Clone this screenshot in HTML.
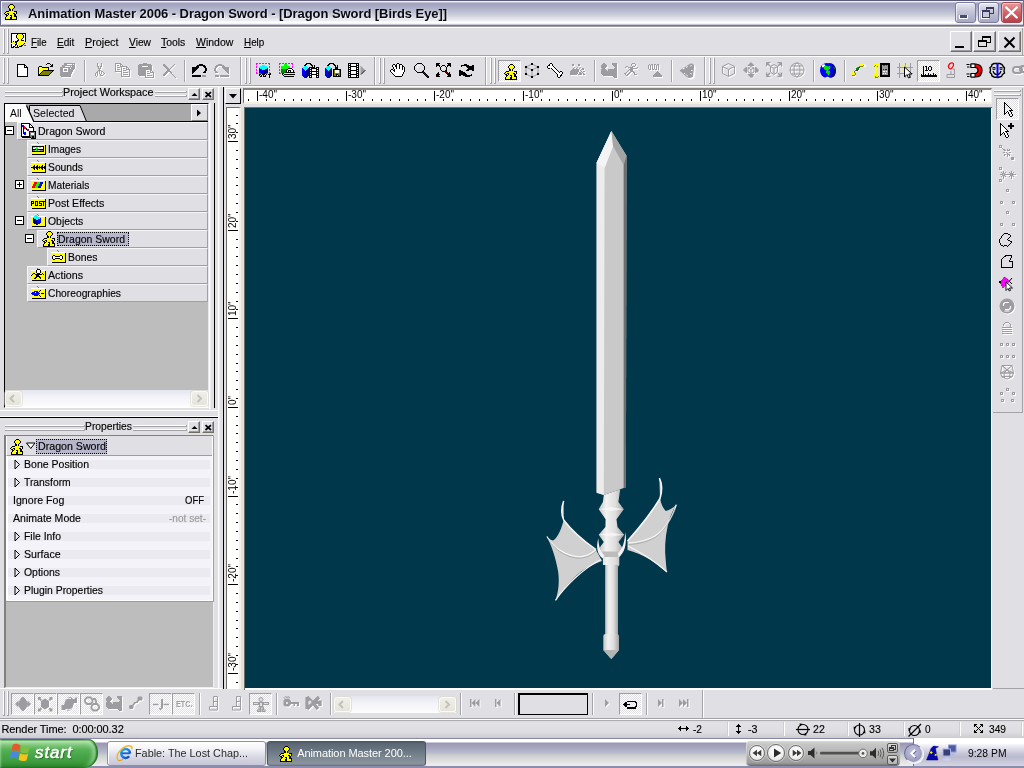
<!DOCTYPE html>
<html><head><meta charset="utf-8"><title>Animation Master 2006</title>
<style>
html,body{margin:0;padding:0;}
body{width:1024px;height:768px;overflow:hidden;background:#e0dfe3;position:relative;font-family:"Liberation Sans",sans-serif;font-size:11px;color:#000;}
div,svg{position:absolute;box-sizing:border-box;}
.t{white-space:nowrap;line-height:13px;font-size:11px;}
.tr,.mn,.pw,.st{-webkit-text-stroke:0.15px currentColor;}
.grip{background:#fff;border-right:1px solid #a4a3a8;border-bottom:1px solid #a4a3a8;}
.hatch{background-image:conic-gradient(#fff 25%,#e0dfe3 0 50%,#fff 0 75%,#e0dfe3 0);background-size:2px 2px;border:1px solid;border-color:#9d9da1 #fff #fff #9d9da1;}
.row{background:#e0dfe3;border-top:1px solid #f6f6f8;border-left:1px solid #f6f6f8;border-bottom:1px solid #a0a0a4;border-right:1px solid #a0a0a4;}
.btn{background:#e0dfe3;border:1px solid;border-color:#fff #716f64 #716f64 #fff;box-shadow:inset -1px -1px 0 #9d9da1;}
</style></head><body><div style="left:0;top:0;width:1024px;height:768px;will-change:transform">
<div style="left:0px;top:0px;width:1024px;height:28px;background:linear-gradient(to bottom,#58587a 0px,#58587a 1px,#f2f2f8 1px,#f2f2f8 2px,#c4c0d4 2px,#c4c0d4 3px,#a6a4c0 3px,#a4a4c2 5px,#b2b4cc 9px,#c0c4d4 13px,#d8d9e3 17px,#f0f1f5 21px,#ffffff 22px,#ffffff 23px,#f4f4f0 23px,#f4f4f0 24px,#c8c8d8 24px,#c8c8d8 25px,#74749a 25px,#74749a 26px,#a0a0a0 26px,#a0a0a0 27px,#ffffff 27px,#ffffff 28px);"></div>
<div style="left:0px;top:0px;width:1px;height:26px;background:#6c6c8c;"></div>
<div style="left:1px;top:1px;width:1px;height:24px;background:#f2f2f8;"></div>
<div style="left:1023px;top:0px;width:1px;height:26px;background:#6c6c8c;"></div>
<svg style="left:4px;top:4px" width="14" height="16" viewBox="0 0 14 16" shape-rendering="crispEdges" ><path fill="#000" d="M6 0h3v1h-3zM5 1h1v1h-1zM9 1h1v1h-1zM4 2h1v1h-1zM10 2h1v1h-1zM4 3h1v1h-1zM10 3h1v1h-1zM5 4h1v1h-1zM9 4h1v1h-1zM5 5h2v1h-2zM8 5h1v1h-1zM5 6h2v1h-2zM8 6h1v1h-1zM2 7h3v1h-3zM10 7h3v1h-3zM1 8h1v1h-1zM12 8h1v1h-1zM0 9h1v1h-1zM3 9h2v1h-2zM9 9h2v1h-2zM12 9h1v1h-1zM1 10h2v1h-2zM4 10h1v1h-1zM10 10h2v1h-2zM2 11h2v1h-2zM6 11h2v1h-2zM10 11h2v1h-2zM2 12h1v1h-1zM7 12h1v1h-1zM10 12h3v1h-3zM1 13h1v1h-1zM6 13h2v1h-2zM12 13h1v1h-1zM1 14h1v1h-1zM6 14h2v1h-2zM12 14h1v1h-1zM1 15h12v1h-12z"/><path fill="#ff0" d="M6 1h3v1h-3zM5 2h5v1h-5zM5 3h5v1h-5zM6 4h3v1h-3zM7 5h1v1h-1zM7 6h1v1h-1zM5 7h5v1h-5zM2 8h10v1h-10zM1 9h2v1h-2zM5 9h4v1h-4zM11 9h1v1h-1zM5 10h5v1h-5zM4 11h2v1h-2zM8 11h2v1h-2zM3 12h3v1h-3zM8 12h2v1h-2zM2 13h4v1h-4zM8 13h4v1h-4zM2 14h4v1h-4zM8 14h4v1h-4z"/><path fill="#fff" d="M3 10h1v1h-1zM6 12h1v1h-1z"/></svg>
<div class="t tt" style="left:28px;top:6px;font-weight:bold;font-size:13px;line-height:16px;color:#0a0a12;text-shadow:1px 1px 0 rgba(255,255,255,.55);letter-spacing:-0.066px;">Animation Master 2006 - Dragon Sword - [Dragon Sword [Birds Eye]]</div>
<div style="left:955px;top:2px;width:21px;height:21px;border:1px solid #7c7c9c;border-radius:3px;background:linear-gradient(to bottom,#e8e8f2 0%,#c4c5d8 45%,#a6a8c4 100%);box-shadow:inset 1px 1px 0 rgba(255,255,255,.7);"><div style="left:3px;top:12px;width:7px;height:3px;background:#4a4a6a;border:1px solid #fff;border-top:none;box-sizing:content-box"></div></div>
<div style="left:978px;top:2px;width:21px;height:21px;border:1px solid #7c7c9c;border-radius:3px;background:linear-gradient(to bottom,#e8e8f2 0%,#c4c5d8 45%,#a6a8c4 100%);box-shadow:inset 1px 1px 0 rgba(255,255,255,.7);"><div style="left:7px;top:4px;width:8px;height:7px;border:1px solid #3a3a5a;border-top-width:2px"></div><div style="left:3px;top:7px;width:8px;height:8px;border:1px solid #3a3a5a;border-top-width:2px;background:#c8c9dc;box-shadow:-1px 1px 0 #fff"></div></div>
<div style="left:1001px;top:2px;width:21px;height:21px;border:1px solid #a04a50;border-radius:3px;background:linear-gradient(to bottom,#e89a98 0%,#d06468 50%,#b84048 100%);box-shadow:inset 1px 1px 0 rgba(255,255,255,.45);"><svg style="left:2px;top:2px" width="15" height="15" viewBox="0 0 15 15" shape-rendering="auto"><path d="M2.2 2.5 L12.8 12.5 M12.8 2.5 L2.2 12.5" stroke="#fff" stroke-width="2.4" stroke-linecap="round"/></svg></div>
<div style="left:0px;top:55px;width:1024px;height:1px;background:#a4a3a8;"></div>
<div style="left:0px;top:56px;width:1024px;height:1px;background:#fff;"></div>
<div style="left:0px;top:85px;width:1024px;height:1px;background:#a4a3a8;"></div>
<div style="left:0px;top:86px;width:1024px;height:1px;background:#fff;"></div>
<div class="grip" style="left:3px;top:29px;width:2px;height:25px;"></div>
<div class="grip" style="left:7px;top:29px;width:2px;height:25px;"></div>
<div class="t mn" style="left:30.6px;top:36px;transform-origin:0 0;transform:scaleX(0.8789);"><u>F</u>ile</div>
<div class="t mn" style="left:57px;top:36px;transform-origin:0 0;transform:scaleX(0.9173);"><u>E</u>dit</div>
<div class="t mn" style="left:84.7px;top:36px;transform-origin:0 0;transform:scaleX(0.9781);"><u>P</u>roject</div>
<div class="t mn" style="left:128.6px;top:36px;transform-origin:0 0;transform:scaleX(0.9300);"><u>V</u>iew</div>
<div class="t mn" style="left:161px;top:36px;transform-origin:0 0;transform:scaleX(0.9460);"><u>T</u>ools</div>
<div class="t mn" style="left:196px;top:36px;transform-origin:0 0;transform:scaleX(0.9530);"><u>W</u>indow</div>
<div class="t mn" style="left:243.8px;top:36px;transform-origin:0 0;transform:scaleX(0.8966);"><u>H</u>elp</div>
<svg style="left:11px;top:33px" width="16" height="15" viewBox="0 0 16 15" shape-rendering="crispEdges" ><path fill="#000" d="M0 0h15v1h-15zM0 1h1v1h-1zM6 1h1v1h-1zM11 1h1v1h-1zM14 1h1v1h-1zM0 2h1v1h-1zM5 2h1v1h-1zM12 2h1v1h-1zM14 2h1v1h-1zM0 3h1v1h-1zM5 3h1v1h-1zM12 3h1v1h-1zM14 3h1v1h-1zM0 4h1v1h-1zM5 4h1v1h-1zM12 4h1v1h-1zM14 4h1v1h-1zM0 5h1v1h-1zM6 5h1v1h-1zM11 5h1v1h-1zM14 5h1v1h-1zM0 6h1v1h-1zM7 6h1v1h-1zM10 6h1v1h-1zM14 6h1v1h-1zM0 7h1v1h-1zM6 7h2v1h-2zM10 7h3v1h-3zM14 7h1v1h-1zM0 8h1v1h-1zM2 8h1v1h-1zM4 8h3v1h-3zM14 8h1v1h-1zM0 9h1v1h-1zM4 9h2v1h-2zM5 10h1v1h-1zM13 10h1v1h-1zM0 11h1v1h-1zM4 11h1v1h-1zM12 11h1v1h-1zM0 12h1v1h-1zM4 12h1v1h-1zM10 12h2v1h-2zM0 13h1v1h-1zM2 13h2v1h-2zM6 13h1v1h-1zM8 13h3v1h-3zM0 14h3v1h-3zM4 14h4v1h-4z"/><path fill="#fff" d="M1 1h5v1h-5zM12 1h2v1h-2zM1 2h4v1h-4zM13 2h1v1h-1zM1 3h4v1h-4zM13 3h1v1h-1zM1 4h4v1h-4zM13 4h1v1h-1zM1 5h5v1h-5zM12 5h2v1h-2zM1 6h6v1h-6zM11 6h3v1h-3zM1 7h5v1h-5zM13 7h1v1h-1zM1 8h1v1h-1zM3 8h1v1h-1zM6 10h1v1h-1zM1 11h3v1h-3zM6 11h1v1h-1zM1 12h3v1h-3zM5 12h1v1h-1zM1 13h1v1h-1zM7 13h1v1h-1z"/><path fill="#ff0" d="M7 1h4v1h-4zM6 2h6v1h-6zM6 3h6v1h-6zM6 4h6v1h-6zM7 5h4v1h-4zM8 6h2v1h-2zM8 7h2v1h-2zM7 8h7v1h-7zM1 9h3v1h-3zM6 9h9v1h-9zM0 10h5v1h-5zM7 10h6v1h-6zM7 11h5v1h-5zM7 12h3v1h-3zM4 13h2v1h-2z"/><path fill="#000080" d="M5 11h1v1h-1zM6 12h1v1h-1z"/><path fill="#008080" d="M13 12h2v1h-2z"/></svg>
<div style="left:1022px;top:28px;width:1px;height:27px;background:#a4a3a8;"></div>
<div class="btn" style="left:950px;top:31px;width:22px;height:21px;"><div style="left:4px;top:14px;width:9px;height:2px;background:#000"></div></div>
<div class="btn" style="left:973px;top:31px;width:23px;height:21px;"><div style="left:8px;top:4px;width:9px;height:7px;border:1px solid #000;border-top-width:2px"></div><div style="left:4px;top:8px;width:9px;height:7px;border:1px solid #000;border-top-width:2px;background:#e0dfe3"></div></div>
<div class="btn" style="left:998px;top:31px;width:23px;height:21px;"><svg style="left:4px;top:4px" width="13" height="13" viewBox="0 0 13 13" shape-rendering="auto"><path d="M1.5 1.5 L11.5 11.5 M11.5 1.5 L1.5 11.5" stroke="#000" stroke-width="2"/></svg></div>
<div class="grip" style="left:3px;top:58px;width:2px;height:26px;"></div>
<div class="grip" style="left:7px;top:58px;width:2px;height:26px;"></div>
<div style="left:84px;top:60px;width:1px;height:22px;background:#a4a3a8;"></div>
<div style="left:85px;top:60px;width:1px;height:22px;background:#fff;"></div>
<div style="left:184px;top:60px;width:1px;height:22px;background:#a4a3a8;"></div>
<div style="left:185px;top:60px;width:1px;height:22px;background:#fff;"></div>
<div style="left:240px;top:57px;width:1px;height:28px;background:#a4a3a8;"></div>
<div style="left:241px;top:57px;width:1px;height:28px;background:#fff;"></div>
<div class="grip" style="left:245px;top:58px;width:2px;height:26px;"></div>
<div class="grip" style="left:249px;top:58px;width:2px;height:26px;"></div>
<div style="left:374px;top:57px;width:1px;height:28px;background:#a4a3a8;"></div>
<div style="left:375px;top:57px;width:1px;height:28px;background:#fff;"></div>
<div class="grip" style="left:379px;top:58px;width:2px;height:26px;"></div>
<div class="grip" style="left:383px;top:58px;width:2px;height:26px;"></div>
<div style="left:485px;top:57px;width:1px;height:28px;background:#a4a3a8;"></div>
<div style="left:486px;top:57px;width:1px;height:28px;background:#fff;"></div>
<div class="grip" style="left:490px;top:58px;width:2px;height:26px;"></div>
<div class="grip" style="left:494px;top:58px;width:2px;height:26px;"></div>
<div class="hatch" style="left:498px;top:60px;width:23px;height:22px;"></div>
<div style="left:594px;top:60px;width:1px;height:22px;background:#a4a3a8;"></div>
<div style="left:595px;top:60px;width:1px;height:22px;background:#fff;"></div>
<div style="left:671px;top:60px;width:1px;height:22px;background:#a4a3a8;"></div>
<div style="left:672px;top:60px;width:1px;height:22px;background:#fff;"></div>
<div style="left:704px;top:57px;width:1px;height:28px;background:#a4a3a8;"></div>
<div style="left:705px;top:57px;width:1px;height:28px;background:#fff;"></div>
<div class="grip" style="left:709px;top:58px;width:2px;height:26px;"></div>
<div class="grip" style="left:713px;top:58px;width:2px;height:26px;"></div>
<div style="left:813px;top:60px;width:1px;height:22px;background:#a4a3a8;"></div>
<div style="left:814px;top:60px;width:1px;height:22px;background:#fff;"></div>
<div style="left:844px;top:60px;width:1px;height:22px;background:#a4a3a8;"></div>
<div style="left:845px;top:60px;width:1px;height:22px;background:#fff;"></div>
<div class="hatch" style="left:917px;top:60px;width:23px;height:22px;"></div>
<svg style="left:17px;top:64px" width="11" height="13" viewBox="0 0 11 13" shape-rendering="crispEdges" ><path fill="#000" d="M0 0h8v1h-8zM0 1h1v1h-1zM7 1h2v1h-2zM0 2h1v1h-1zM7 2h1v1h-1zM9 2h1v1h-1zM0 3h1v1h-1zM7 3h4v1h-4zM0 4h1v1h-1zM10 4h1v1h-1zM0 5h1v1h-1zM10 5h1v1h-1zM0 6h1v1h-1zM10 6h1v1h-1zM0 7h1v1h-1zM10 7h1v1h-1zM0 8h1v1h-1zM10 8h1v1h-1zM0 9h1v1h-1zM10 9h1v1h-1zM0 10h1v1h-1zM10 10h1v1h-1zM0 11h1v1h-1zM10 11h1v1h-1zM0 12h11v1h-11z"/><path fill="#fff" d="M1 1h6v1h-6zM1 2h6v1h-6zM8 2h1v1h-1zM1 3h6v1h-6zM1 4h9v1h-9zM1 5h9v1h-9zM1 6h9v1h-9zM1 7h9v1h-9zM1 8h9v1h-9zM1 9h9v1h-9zM1 10h9v1h-9zM1 11h9v1h-9z"/></svg>
<svg style="left:38px;top:63px" width="16" height="13" viewBox="0 0 16 13" shape-rendering="crispEdges" ><path fill="#000" d="M9 0h3v1h-3zM8 1h1v1h-1zM12 1h1v1h-1zM14 1h1v1h-1zM13 2h2v1h-2zM1 3h3v1h-3zM12 3h3v1h-3zM0 4h1v1h-1zM4 4h7v1h-7zM0 5h1v1h-1zM10 5h1v1h-1zM0 6h1v1h-1zM10 6h1v1h-1zM0 7h1v1h-1zM5 7h11v1h-11zM0 8h1v1h-1zM4 8h1v1h-1zM14 8h1v1h-1zM0 9h1v1h-1zM3 9h1v1h-1zM13 9h1v1h-1zM0 10h1v1h-1zM2 10h1v1h-1zM12 10h1v1h-1zM0 11h2v1h-2zM11 11h1v1h-1zM0 12h11v1h-11z"/><path fill="#ff0" d="M1 4h1v1h-1zM3 4h1v1h-1zM2 5h1v1h-1zM4 5h1v1h-1zM6 5h1v1h-1zM8 5h1v1h-1zM1 6h1v1h-1zM3 6h1v1h-1zM5 6h1v1h-1zM7 6h1v1h-1zM9 6h1v1h-1zM2 7h1v1h-1zM4 7h1v1h-1zM1 8h1v1h-1zM3 8h1v1h-1zM2 9h1v1h-1zM1 10h1v1h-1z"/><path fill="#fff" d="M2 4h1v1h-1zM1 5h1v1h-1zM3 5h1v1h-1zM5 5h1v1h-1zM7 5h1v1h-1zM9 5h1v1h-1zM2 6h1v1h-1zM4 6h1v1h-1zM6 6h1v1h-1zM8 6h1v1h-1zM1 7h1v1h-1zM3 7h1v1h-1zM2 8h1v1h-1zM1 9h1v1h-1z"/><path fill="#808000" d="M5 8h9v1h-9zM4 9h9v1h-9zM3 10h9v1h-9zM2 11h9v1h-9z"/></svg>
<svg style="left:60px;top:63px" width="16" height="15" viewBox="0 0 16 15" shape-rendering="crispEdges" ><path fill="#9d9da1" d="M4 0h11v1h-11zM4 1h3v1h-3zM12 1h1v1h-1zM14 1h1v1h-1zM2 2h13v1h-13zM2 3h3v1h-3zM10 3h1v1h-1zM12 3h3v1h-3zM0 4h15v1h-15zM0 5h3v1h-3zM8 5h2v1h-2zM11 5h4v1h-4zM0 6h3v1h-3zM4 6h3v1h-3zM8 6h6v1h-6zM0 7h3v1h-3zM4 7h3v1h-3zM8 7h5v1h-5zM0 8h3v1h-3zM8 8h5v1h-5zM0 9h12v1h-12zM0 10h12v1h-12zM0 11h11v1h-11zM0 12h11v1h-11zM1 13h10v1h-10z"/><path fill="#fff" d="M7 1h5v1h-5zM13 1h1v1h-1zM15 1h1v1h-1zM15 2h1v1h-1zM5 3h5v1h-5zM11 3h1v1h-1zM15 3h1v1h-1zM15 4h1v1h-1zM3 5h5v1h-5zM10 5h1v1h-1zM15 5h1v1h-1zM3 6h1v1h-1zM7 6h1v1h-1zM14 6h1v1h-1zM3 7h1v1h-1zM7 7h1v1h-1zM13 7h2v1h-2zM3 8h5v1h-5zM13 8h1v1h-1zM12 9h2v1h-2zM12 10h1v1h-1zM11 11h2v1h-2zM11 12h1v1h-1zM11 13h1v1h-1zM2 14h10v1h-10z"/></svg>
<svg style="left:95px;top:63px" width="11" height="15" viewBox="0 0 11 15" shape-rendering="crispEdges" ><path fill="#9d9da1" d="M2 0h1v1h-1zM6 0h1v1h-1zM2 1h1v1h-1zM6 1h1v1h-1zM2 2h1v1h-1zM6 2h1v1h-1zM2 3h2v1h-2zM5 3h2v1h-2zM3 4h1v1h-1zM5 4h1v1h-1zM3 5h3v1h-3zM4 6h1v1h-1zM3 7h3v1h-3zM2 8h1v1h-1zM4 8h1v1h-1zM6 8h2v1h-2zM1 9h2v1h-2zM4 9h1v1h-1zM6 9h1v1h-1zM8 9h1v1h-1zM0 10h1v1h-1zM2 10h1v1h-1zM4 10h1v1h-1zM6 10h1v1h-1zM9 10h1v1h-1zM0 11h1v1h-1zM2 11h1v1h-1zM5 11h1v1h-1zM8 11h1v1h-1zM0 12h1v1h-1zM2 12h1v1h-1zM5 12h3v1h-3zM1 13h1v1h-1z"/><path fill="#fff" d="M3 1h1v1h-1zM7 1h1v1h-1zM3 2h1v1h-1zM7 2h1v1h-1zM7 3h1v1h-1zM4 4h1v1h-1zM6 4h2v1h-2zM6 5h1v1h-1zM5 6h2v1h-2zM5 8h1v1h-1zM3 9h1v1h-1zM5 9h1v1h-1zM7 9h1v1h-1zM3 10h1v1h-1zM5 10h1v1h-1zM7 10h1v1h-1zM1 11h1v1h-1zM3 11h1v1h-1zM7 11h1v1h-1zM10 11h1v1h-1zM1 12h1v1h-1zM3 12h1v1h-1zM9 12h1v1h-1zM3 13h1v1h-1zM6 13h3v1h-3zM2 14h1v1h-1z"/></svg>
<svg style="left:115px;top:63px" width="17" height="15" viewBox="0 0 17 15" shape-rendering="crispEdges" ><path fill="#9d9da1" d="M0 0h6v1h-6zM0 1h1v1h-1zM5 1h2v1h-2zM0 2h1v1h-1zM2 2h2v1h-2zM5 2h1v1h-1zM7 2h1v1h-1zM0 3h1v1h-1zM5 3h7v1h-7zM0 4h1v1h-1zM2 4h3v1h-3zM6 4h1v1h-1zM11 4h2v1h-2zM0 5h1v1h-1zM6 5h1v1h-1zM8 5h2v1h-2zM11 5h1v1h-1zM13 5h1v1h-1zM0 6h1v1h-1zM2 6h3v1h-3zM6 6h1v1h-1zM11 6h4v1h-4zM0 7h1v1h-1zM6 7h1v1h-1zM8 7h3v1h-3zM14 7h1v1h-1zM0 8h7v1h-7zM14 8h1v1h-1zM6 9h1v1h-1zM8 9h5v1h-5zM14 9h1v1h-1zM6 10h1v1h-1zM14 10h1v1h-1zM6 11h1v1h-1zM8 11h5v1h-5zM14 11h1v1h-1zM6 12h1v1h-1zM14 12h1v1h-1zM6 13h9v1h-9z"/><path fill="#fff" d="M1 1h4v1h-4zM1 2h1v1h-1zM6 2h1v1h-1zM1 3h1v1h-1zM3 3h2v1h-2zM1 4h1v1h-1zM7 4h4v1h-4zM1 5h1v1h-1zM3 5h3v1h-3zM7 5h1v1h-1zM12 5h1v1h-1zM1 6h1v1h-1zM7 6h1v1h-1zM9 6h2v1h-2zM1 7h1v1h-1zM3 7h3v1h-3zM7 7h1v1h-1zM12 7h2v1h-2zM15 7h1v1h-1zM7 8h1v1h-1zM9 8h3v1h-3zM15 8h1v1h-1zM1 9h5v1h-5zM7 9h1v1h-1zM15 9h1v1h-1zM7 10h1v1h-1zM9 10h5v1h-5zM15 10h1v1h-1zM7 11h1v1h-1zM15 11h1v1h-1zM7 12h1v1h-1zM9 12h5v1h-5zM15 12h1v1h-1zM15 13h1v1h-1zM7 14h9v1h-9z"/></svg>
<svg style="left:138px;top:63px" width="17" height="16" viewBox="0 0 17 16" shape-rendering="crispEdges" ><path fill="#9d9da1" d="M5 0h4v1h-4zM1 1h12v1h-12zM0 2h14v1h-14zM0 3h14v1h-14zM0 4h14v1h-14zM0 5h14v1h-14zM0 6h14v1h-14zM0 7h8v1h-8zM12 7h2v1h-2zM0 8h8v1h-8zM9 8h2v1h-2zM12 8h1v1h-1zM14 8h1v1h-1zM0 9h8v1h-8zM12 9h4v1h-4zM0 10h8v1h-8zM9 10h3v1h-3zM15 10h1v1h-1zM0 11h8v1h-8zM15 11h1v1h-1zM1 12h7v1h-7zM9 12h5v1h-5zM15 12h1v1h-1zM7 13h1v1h-1zM15 13h1v1h-1zM7 14h9v1h-9z"/><path fill="#fff" d="M14 3h1v1h-1zM14 4h1v1h-1zM14 5h1v1h-1zM14 6h1v1h-1zM8 7h4v1h-4zM14 7h1v1h-1zM8 8h1v1h-1zM13 8h1v1h-1zM8 9h1v1h-1zM10 9h2v1h-2zM8 10h1v1h-1zM13 10h2v1h-2zM16 10h1v1h-1zM8 11h1v1h-1zM10 11h3v1h-3zM16 11h1v1h-1zM8 12h1v1h-1zM16 12h1v1h-1zM2 13h5v1h-5zM8 13h1v1h-1zM10 13h5v1h-5zM16 13h1v1h-1zM16 14h1v1h-1zM8 15h9v1h-9z"/></svg>
<svg style="left:142px;top:66px" width="6" height="1" viewBox="0 0 6 1" shape-rendering="crispEdges" ><path fill="#fff" d="M0 0h6v1h-6z"/></svg>
<svg style="left:162px;top:64px" width="15" height="15" viewBox="0 0 15 15" shape-rendering="crispEdges" ><path fill="#9d9da1" d="M1 0h2v1h-2zM12 0h1v1h-1zM1 1h3v1h-3zM11 1h1v1h-1zM2 2h3v1h-3zM10 2h1v1h-1zM3 3h3v1h-3zM9 3h1v1h-1zM4 4h3v1h-3zM8 4h1v1h-1zM5 5h3v1h-3zM5 6h3v1h-3zM4 7h5v1h-5zM3 8h3v1h-3zM8 8h2v1h-2zM2 9h3v1h-3zM9 9h1v1h-1zM1 10h3v1h-3zM10 10h1v1h-1zM1 11h2v1h-2zM11 11h1v1h-1zM12 12h1v1h-1zM13 13h1v1h-1z"/><path fill="#fff" d="M13 1h1v1h-1zM12 2h1v1h-1zM11 3h1v1h-1zM10 4h1v1h-1zM9 5h1v1h-1zM8 6h1v1h-1zM6 8h2v1h-2zM5 9h2v1h-2zM10 9h1v1h-1zM4 10h2v1h-2zM3 11h2v1h-2zM2 12h2v1h-2zM14 14h1v1h-1z"/></svg>
<svg style="left:192px;top:64px" width="15" height="13" viewBox="0 0 15 13" shape-rendering="crispEdges" ><path fill="#000" d="M7 0h4v1h-4zM5 1h8v1h-8zM4 2h3v1h-3zM11 2h3v1h-3zM0 3h7v1h-7zM12 3h2v1h-2zM0 4h6v1h-6zM13 4h2v1h-2zM0 5h5v1h-5zM13 5h2v1h-2zM0 6h4v1h-4zM13 6h2v1h-2zM0 7h3v1h-3zM12 7h2v1h-2zM0 8h2v1h-2zM11 8h3v1h-3zM0 9h1v1h-1zM0 11h9v1h-9zM0 12h9v1h-9z"/><path fill="#9d9da1" d="M10 11h4v1h-4zM10 12h4v1h-4z"/></svg>
<svg style="left:214px;top:64px" width="16" height="14" viewBox="0 0 16 14" shape-rendering="crispEdges" ><path fill="#9d9da1" d="M4 0h4v1h-4zM2 1h8v1h-8zM1 2h3v1h-3zM8 2h3v1h-3zM1 3h2v1h-2zM8 3h7v1h-7zM0 4h2v1h-2zM9 4h6v1h-6zM0 5h2v1h-2zM10 5h5v1h-5zM0 6h2v1h-2zM11 6h4v1h-4zM1 7h2v1h-2zM12 7h3v1h-3zM1 8h3v1h-3zM13 8h2v1h-2zM14 9h1v1h-1zM1 11h4v1h-4zM6 11h9v1h-9zM1 12h4v1h-4zM6 12h9v1h-9z"/><path fill="#fff" d="M4 2h4v1h-4zM3 3h2v1h-2zM2 4h2v1h-2zM15 4h1v1h-1zM2 5h1v1h-1zM15 5h1v1h-1zM2 6h1v1h-1zM15 6h1v1h-1zM15 7h1v1h-1zM15 8h1v1h-1zM2 9h3v1h-3zM15 9h1v1h-1zM15 10h1v1h-1zM5 12h1v1h-1zM15 12h1v1h-1zM2 13h4v1h-4zM7 13h9v1h-9z"/></svg>
<svg style="left:256px;top:63px" width="16" height="15" viewBox="0 0 16 15" shape-rendering="crispEdges" ><path fill="#f0f" d="M0 0h2v1h-2zM3 0h2v1h-2zM6 0h2v1h-2zM9 0h2v1h-2zM12 0h2v1h-2zM0 1h1v1h-1zM13 1h1v1h-1zM0 3h1v1h-1zM13 3h1v1h-1zM0 4h1v1h-1zM13 4h1v1h-1zM0 6h1v1h-1zM13 6h1v1h-1zM0 7h1v1h-1zM13 7h1v1h-1zM0 9h1v1h-1zM13 9h1v1h-1zM0 10h2v1h-2zM3 10h2v1h-2zM10 10h2v1h-2zM13 10h1v1h-1z"/><path fill="#0ff" d="M6 2h3v1h-3zM4 3h7v1h-7zM3 4h9v1h-9zM4 5h7v1h-7zM6 6h3v1h-3z"/><path fill="#00f" d="M3 5h1v1h-1zM3 6h3v1h-3zM3 7h5v1h-5zM3 8h5v1h-5zM3 9h5v1h-5zM5 10h3v1h-3z"/><path fill="#000080" d="M11 5h1v1h-1zM9 6h3v1h-3zM8 7h4v1h-4zM8 8h4v1h-4zM8 9h4v1h-4zM8 10h2v1h-2z"/><path fill="#000" d="M14 10h1v1h-1zM3 11h2v1h-2zM6 11h3v1h-3zM10 11h1v1h-1zM12 11h3v1h-3zM3 12h1v1h-1zM5 12h1v1h-1zM7 12h1v1h-1zM9 12h1v1h-1zM13 12h1v1h-1zM4 13h2v1h-2zM7 13h3v1h-3zM13 13h1v1h-1zM13 14h1v1h-1z"/><path fill="#fff" d="M12 12h1v1h-1zM14 12h1v1h-1z"/></svg>
<svg style="left:279px;top:63px" width="16" height="14" viewBox="0 0 16 14" shape-rendering="crispEdges" ><path fill="#f0f" d="M0 0h2v1h-2zM3 0h2v1h-2zM6 0h2v1h-2zM9 0h2v1h-2zM12 0h2v1h-2zM0 1h1v1h-1zM13 1h1v1h-1zM0 3h1v1h-1zM13 3h1v1h-1zM0 4h1v1h-1zM13 4h1v1h-1zM0 6h1v1h-1zM0 7h1v1h-1zM0 9h1v1h-1zM0 10h2v1h-2z"/><path fill="#0f0" d="M5 1h3v1h-3zM5 2h3v1h-3zM2 3h9v1h-9zM2 4h9v1h-9zM2 5h7v1h-7z"/><path fill="#000" d="M9 5h4v1h-4zM8 6h1v1h-1zM13 6h1v1h-1zM7 7h1v1h-1zM9 7h3v1h-3zM14 7h1v1h-1zM7 8h1v1h-1zM9 8h1v1h-1zM11 8h1v1h-1zM14 8h1v1h-1zM6 9h10v1h-10zM3 10h2v1h-2zM3 11h1v1h-1zM5 11h11v1h-11zM4 12h1v1h-1zM5 13h10v1h-10z"/><path fill="#080" d="M2 6h5v1h-5zM2 7h5v1h-5zM2 8h5v1h-5zM2 9h4v1h-4z"/><path fill="#000080" d="M7 6h1v1h-1z"/><path fill="#fff" d="M9 6h4v1h-4zM8 7h1v1h-1zM12 7h2v1h-2zM8 8h1v1h-1zM10 8h1v1h-1zM12 8h2v1h-2z"/></svg>
<svg style="left:302px;top:63px" width="16" height="7" viewBox="0 0 16 7" shape-rendering="crispEdges" ><path fill="#000" d="M4 0h5v1h-5zM3 1h2v1h-2zM8 1h2v1h-2zM2 2h2v1h-2zM9 2h2v1h-2zM12 2h1v1h-1zM2 3h1v1h-1zM10 3h1v1h-1zM12 3h1v1h-1zM10 4h3v1h-3zM10 5h3v1h-3zM11 6h1v1h-1z"/></svg>
<svg style="left:302px;top:66px" width="7" height="12" viewBox="0 0 7 12" shape-rendering="crispEdges" ><path fill="#0ff" d="M2 0h3v1h-3zM1 1h5v1h-5zM1 2h5v1h-5zM2 3h3v1h-3zM3 4h1v1h-1z"/><path fill="#00f" d="M0 2h1v1h-1zM0 3h2v1h-2zM0 4h3v1h-3zM0 5h3v1h-3zM0 6h3v1h-3zM0 7h3v1h-3zM0 8h3v1h-3zM0 9h3v1h-3zM1 10h2v1h-2zM2 11h1v1h-1z"/><path fill="#000080" d="M6 2h1v1h-1zM5 3h2v1h-2zM4 4h3v1h-3zM3 5h4v1h-4zM3 6h4v1h-4zM3 7h4v1h-4zM3 8h4v1h-4zM3 9h4v1h-4zM3 10h3v1h-3zM3 11h2v1h-2z"/></svg>
<svg style="left:309px;top:67px" width="10" height="11" viewBox="0 0 10 11" shape-rendering="crispEdges" ><path fill="#000" d="M0 0h3v1h-3zM7 0h3v1h-3zM0 1h1v1h-1zM2 1h6v1h-6zM9 1h1v1h-1zM0 2h3v1h-3zM7 2h3v1h-3zM0 3h1v1h-1zM2 3h1v1h-1zM7 3h1v1h-1zM9 3h1v1h-1zM0 4h10v1h-10zM0 5h1v1h-1zM2 5h1v1h-1zM7 5h1v1h-1zM9 5h1v1h-1zM0 6h3v1h-3zM7 6h3v1h-3zM0 7h1v1h-1zM2 7h6v1h-6zM9 7h1v1h-1zM0 8h3v1h-3zM7 8h3v1h-3zM0 9h1v1h-1zM2 9h1v1h-1zM7 9h1v1h-1zM9 9h1v1h-1zM0 10h3v1h-3zM7 10h3v1h-3z"/><path fill="#fff" d="M1 1h1v1h-1zM8 1h1v1h-1zM3 2h4v1h-4zM1 3h1v1h-1zM3 3h4v1h-4zM8 3h1v1h-1zM1 5h1v1h-1zM3 5h4v1h-4zM8 5h1v1h-1zM3 6h4v1h-4zM1 7h1v1h-1zM8 7h1v1h-1zM3 8h4v1h-4zM1 9h1v1h-1zM3 9h4v1h-4zM8 9h1v1h-1z"/></svg>
<svg style="left:325px;top:63px" width="16" height="7" viewBox="0 0 16 7" shape-rendering="crispEdges" ><path fill="#000" d="M4 0h5v1h-5zM3 1h2v1h-2zM8 1h2v1h-2zM2 2h2v1h-2zM9 2h2v1h-2zM12 2h1v1h-1zM2 3h1v1h-1zM10 3h1v1h-1zM12 3h1v1h-1zM10 4h3v1h-3zM10 5h3v1h-3zM11 6h1v1h-1z"/></svg>
<svg style="left:325px;top:66px" width="7" height="12" viewBox="0 0 7 12" shape-rendering="crispEdges" ><path fill="#0ff" d="M2 0h3v1h-3zM1 1h5v1h-5zM1 2h5v1h-5zM2 3h3v1h-3zM3 4h1v1h-1z"/><path fill="#00f" d="M0 2h1v1h-1zM0 3h2v1h-2zM0 4h3v1h-3zM0 5h3v1h-3zM0 6h3v1h-3zM0 7h3v1h-3zM0 8h3v1h-3zM0 9h3v1h-3zM1 10h2v1h-2zM2 11h1v1h-1z"/><path fill="#000080" d="M6 2h1v1h-1zM5 3h2v1h-2zM4 4h3v1h-3zM3 5h4v1h-4zM3 6h4v1h-4zM3 7h4v1h-4zM3 8h4v1h-4zM3 9h4v1h-4zM3 10h3v1h-3zM3 11h2v1h-2z"/></svg>
<svg style="left:333px;top:69px" width="8" height="8" viewBox="0 0 8 8" shape-rendering="crispEdges" ><path fill="#000" d="M0 0h8v1h-8zM0 1h1v1h-1zM7 1h1v1h-1zM0 2h1v1h-1zM7 2h1v1h-1zM0 3h1v1h-1zM7 3h1v1h-1zM0 4h1v1h-1zM7 4h1v1h-1zM0 5h1v1h-1zM3 5h2v1h-2zM7 5h1v1h-1zM0 6h1v1h-1zM3 6h1v1h-1zM5 6h1v1h-1zM7 6h1v1h-1zM0 7h8v1h-8z"/><path fill="#808000" d="M1 1h1v1h-1zM6 1h1v1h-1zM1 2h1v1h-1zM6 2h1v1h-1zM1 3h1v1h-1zM6 3h1v1h-1zM1 4h6v1h-6zM1 5h2v1h-2zM5 5h2v1h-2zM1 6h2v1h-2zM6 6h1v1h-1z"/><path fill="#fff" d="M2 1h4v1h-4zM2 2h4v1h-4zM2 3h4v1h-4zM4 6h1v1h-1z"/></svg>
<svg style="left:348px;top:63px" width="11" height="15" viewBox="0 0 11 15" shape-rendering="crispEdges" ><path fill="#000" d="M0 0h11v1h-11zM0 1h1v1h-1zM2 1h1v1h-1zM8 1h1v1h-1zM10 1h1v1h-1zM0 2h3v1h-3zM8 2h3v1h-3zM0 3h1v1h-1zM2 3h7v1h-7zM10 3h1v1h-1zM0 4h3v1h-3zM8 4h3v1h-3zM0 5h1v1h-1zM2 5h1v1h-1zM8 5h1v1h-1zM10 5h1v1h-1zM0 6h3v1h-3zM8 6h3v1h-3zM0 7h1v1h-1zM2 7h7v1h-7zM10 7h1v1h-1zM0 8h3v1h-3zM8 8h3v1h-3zM0 9h1v1h-1zM2 9h1v1h-1zM8 9h1v1h-1zM10 9h1v1h-1zM0 10h3v1h-3zM8 10h3v1h-3zM0 11h1v1h-1zM2 11h7v1h-7zM10 11h1v1h-1zM0 12h3v1h-3zM8 12h3v1h-3zM0 13h1v1h-1zM2 13h1v1h-1zM8 13h1v1h-1zM10 13h1v1h-1zM0 14h11v1h-11z"/><path fill="#fff" d="M1 1h1v1h-1zM3 1h5v1h-5zM9 1h1v1h-1zM3 2h5v1h-5zM1 3h1v1h-1zM9 3h1v1h-1zM3 4h5v1h-5zM1 5h1v1h-1zM3 5h5v1h-5zM9 5h1v1h-1zM3 6h5v1h-5zM1 7h1v1h-1zM9 7h1v1h-1zM3 8h5v1h-5zM1 9h1v1h-1zM3 9h5v1h-5zM9 9h1v1h-1zM3 10h5v1h-5zM1 11h1v1h-1zM9 11h1v1h-1zM3 12h5v1h-5zM1 13h1v1h-1zM3 13h5v1h-5zM9 13h1v1h-1z"/></svg>
<svg style="left:360px;top:65px" width="6" height="10" viewBox="0 0 6 10" shape-rendering="auto"><path d="M0.5 0.5 L5 5 L0.5 9.5 Z" fill="#9d9da1"/><path d="M1 9.5 L5.3 5.2" stroke="#000" stroke-width="1"/></svg>
<svg style="left:390px;top:63px" width="16" height="14" viewBox="0 0 16 14" shape-rendering="crispEdges" ><path fill="#000" d="M7 0h2v1h-2zM3 1h2v1h-2zM6 1h1v1h-1zM9 1h3v1h-3zM2 2h1v1h-1zM5 2h2v1h-2zM9 2h1v1h-1zM12 2h1v1h-1zM2 3h1v1h-1zM5 3h2v1h-2zM9 3h1v1h-1zM12 3h2v1h-2zM3 4h1v1h-1zM6 4h1v1h-1zM9 4h1v1h-1zM12 4h1v1h-1zM14 4h1v1h-1zM3 5h1v1h-1zM6 5h1v1h-1zM9 5h1v1h-1zM12 5h1v1h-1zM14 5h1v1h-1zM1 6h2v1h-2zM4 6h1v1h-1zM12 6h1v1h-1zM14 6h1v1h-1zM0 7h1v1h-1zM3 7h2v1h-2zM14 7h1v1h-1zM0 8h1v1h-1zM4 8h1v1h-1zM14 8h1v1h-1zM1 9h1v1h-1zM13 9h1v1h-1zM2 10h1v1h-1zM13 10h1v1h-1zM3 11h1v1h-1zM12 11h1v1h-1zM4 12h1v1h-1zM12 12h1v1h-1zM5 13h7v1h-7z"/><path fill="#fff" d="M7 1h2v1h-2zM3 2h2v1h-2zM7 2h2v1h-2zM10 2h2v1h-2zM3 3h2v1h-2zM7 3h2v1h-2zM10 3h2v1h-2zM4 4h2v1h-2zM7 4h2v1h-2zM10 4h2v1h-2zM13 4h1v1h-1zM4 5h2v1h-2zM7 5h2v1h-2zM10 5h2v1h-2zM13 5h1v1h-1zM5 6h7v1h-7zM13 6h1v1h-1zM1 7h2v1h-2zM5 7h9v1h-9zM1 8h3v1h-3zM5 8h9v1h-9zM2 9h11v1h-11zM3 10h10v1h-10zM4 11h8v1h-8zM5 12h7v1h-7z"/></svg>
<svg style="left:414px;top:63px" width="15" height="15" viewBox="0 0 15 15" shape-rendering="crispEdges" ><path fill="#000" d="M3 0h5v1h-5zM2 1h1v1h-1zM8 1h1v1h-1zM1 2h1v1h-1zM9 2h1v1h-1zM0 3h1v1h-1zM10 3h1v1h-1zM0 4h1v1h-1zM10 4h1v1h-1zM0 5h1v1h-1zM10 5h1v1h-1zM0 6h1v1h-1zM10 6h1v1h-1zM1 7h1v1h-1zM9 7h1v1h-1zM2 8h1v1h-1zM8 8h2v1h-2zM3 9h6v1h-6zM10 9h1v1h-1zM9 10h1v1h-1zM11 10h1v1h-1zM10 11h1v1h-1zM12 11h1v1h-1zM11 12h1v1h-1zM13 12h1v1h-1zM12 13h1v1h-1zM14 13h1v1h-1zM13 14h2v1h-2z"/><path fill="#fff" d="M4 2h2v1h-2zM3 3h1v1h-1zM3 4h1v1h-1z"/><path fill="#800000" d="M9 9h1v1h-1zM10 10h1v1h-1zM11 11h1v1h-1zM12 12h1v1h-1zM13 13h1v1h-1z"/></svg>
<svg style="left:436px;top:63px" width="16" height="14" viewBox="0 0 16 14" shape-rendering="crispEdges" ><path fill="#000" d="M0 0h4v1h-4zM11 0h4v1h-4zM0 1h3v1h-3zM12 1h3v1h-3zM0 2h4v1h-4zM6 2h3v1h-3zM11 2h4v1h-4zM0 3h1v1h-1zM3 3h1v1h-1zM5 3h1v1h-1zM9 3h1v1h-1zM11 3h1v1h-1zM14 3h1v1h-1zM4 4h1v1h-1zM10 4h1v1h-1zM4 5h1v1h-1zM10 5h1v1h-1zM4 6h1v1h-1zM10 6h1v1h-1zM5 7h1v1h-1zM9 7h2v1h-2zM6 8h3v1h-3zM10 8h1v1h-1zM2 9h1v1h-1zM9 9h1v1h-1zM11 9h1v1h-1zM13 9h1v1h-1zM1 10h2v1h-2zM10 10h1v1h-1zM12 10h2v1h-2zM0 11h4v1h-4zM11 11h4v1h-4zM0 12h3v1h-3zM12 12h3v1h-3zM0 13h4v1h-4zM11 13h4v1h-4z"/><path fill="#fff" d="M7 4h1v1h-1zM6 5h1v1h-1z"/><path fill="#800000" d="M9 8h1v1h-1zM10 9h1v1h-1zM11 10h1v1h-1z"/></svg>
<svg style="left:459px;top:64px" width="16" height="13" viewBox="0 0 16 13" shape-rendering="crispEdges" ><path fill="#000" d="M5 0h3v1h-3zM2 1h8v1h-8zM13 1h2v1h-2zM2 2h1v1h-1zM7 2h8v1h-8zM8 3h7v1h-7zM9 4h6v1h-6zM8 5h7v1h-7zM0 6h2v1h-2zM7 6h3v1h-3zM13 6h2v1h-2zM0 7h4v1h-4zM0 8h6v1h-6zM0 9h7v1h-7zM0 10h8v1h-8zM12 10h1v1h-1zM0 11h2v1h-2zM4 11h9v1h-9zM6 12h5v1h-5z"/></svg>
<svg style="left:504px;top:64px" width="14" height="16" viewBox="0 0 14 16" shape-rendering="crispEdges" ><path fill="#000" d="M6 0h3v1h-3zM5 1h1v1h-1zM9 1h1v1h-1zM4 2h1v1h-1zM10 2h1v1h-1zM4 3h1v1h-1zM10 3h1v1h-1zM5 4h1v1h-1zM9 4h1v1h-1zM5 5h2v1h-2zM8 5h1v1h-1zM5 6h2v1h-2zM8 6h1v1h-1zM2 7h3v1h-3zM10 7h3v1h-3zM1 8h1v1h-1zM12 8h1v1h-1zM0 9h1v1h-1zM3 9h2v1h-2zM9 9h2v1h-2zM12 9h1v1h-1zM1 10h2v1h-2zM4 10h1v1h-1zM10 10h2v1h-2zM2 11h2v1h-2zM6 11h2v1h-2zM10 11h2v1h-2zM2 12h1v1h-1zM7 12h1v1h-1zM10 12h3v1h-3zM1 13h1v1h-1zM6 13h2v1h-2zM12 13h1v1h-1zM1 14h1v1h-1zM6 14h2v1h-2zM12 14h1v1h-1zM1 15h12v1h-12z"/><path fill="#ff0" d="M6 1h3v1h-3zM5 2h5v1h-5zM5 3h5v1h-5zM6 4h3v1h-3zM7 5h1v1h-1zM7 6h1v1h-1zM5 7h5v1h-5zM2 8h10v1h-10zM1 9h2v1h-2zM5 9h4v1h-4zM11 9h1v1h-1zM5 10h5v1h-5zM4 11h2v1h-2zM8 11h2v1h-2zM3 12h3v1h-3zM8 12h2v1h-2zM2 13h4v1h-4zM8 13h4v1h-4zM2 14h4v1h-4zM8 14h4v1h-4z"/><path fill="#fff" d="M3 10h1v1h-1zM6 12h1v1h-1z"/></svg>
<svg style="left:524px;top:62px" width="17" height="17" viewBox="0 0 17 17" shape-rendering="auto"><path d="M8 2 L2 5 L2 12 L8 15 L14 12 L14 5 Z M2 5 L8 8 L14 5 M8 8 L8 15" fill="none" stroke="#9d9da1" stroke-width="1"/><rect x="7" y="1" width="2" height="2" fill="#000"/><rect x="1" y="4" width="2" height="2" fill="#000"/><rect x="13" y="4" width="2" height="2" fill="#000"/><rect x="7" y="7" width="2" height="2" fill="#000"/><rect x="1" y="11" width="2" height="2" fill="#000"/><rect x="13" y="11" width="2" height="2" fill="#000"/><rect x="7" y="14" width="2" height="2" fill="#000"/></svg>
<svg style="left:547px;top:63px" width="16" height="15" viewBox="0 0 16 15" shape-rendering="crispEdges" ><path fill="#000" d="M3 0h2v1h-2zM2 1h1v1h-1zM5 1h1v1h-1zM1 2h2v1h-2zM5 2h1v1h-1zM0 3h1v1h-1zM6 3h1v1h-1zM0 4h1v1h-1zM7 4h1v1h-1zM1 5h2v1h-2zM4 5h1v1h-1zM8 5h1v1h-1zM5 6h1v1h-1zM9 6h1v1h-1zM6 7h1v1h-1zM10 7h1v1h-1zM7 8h1v1h-1zM11 8h1v1h-1zM13 8h2v1h-2zM8 9h1v1h-1zM12 9h1v1h-1zM15 9h1v1h-1zM9 10h1v1h-1zM15 10h1v1h-1zM10 11h1v1h-1zM14 11h1v1h-1zM10 12h1v1h-1zM13 12h2v1h-2zM10 13h1v1h-1zM13 13h1v1h-1zM11 14h2v1h-2z"/><path fill="#fff" d="M3 1h2v1h-2zM3 2h2v1h-2zM1 3h5v1h-5zM1 4h6v1h-6zM5 5h3v1h-3zM6 6h3v1h-3zM7 7h3v1h-3zM8 8h3v1h-3zM9 9h3v1h-3zM13 9h2v1h-2zM10 10h5v1h-5zM11 11h3v1h-3zM11 12h2v1h-2zM11 13h2v1h-2z"/></svg>
<svg style="left:570px;top:64px" width="17" height="13" viewBox="0 0 17 13" shape-rendering="crispEdges" ><path fill="#9d9da1" d="M2 0h2v1h-2zM8 0h2v1h-2zM2 1h2v1h-2zM8 1h2v1h-2zM4 3h1v1h-1zM7 3h1v1h-1zM10 3h1v1h-1zM3 4h1v1h-1zM6 4h1v1h-1zM9 4h1v1h-1zM12 4h2v1h-2zM2 5h7v1h-7zM11 5h3v1h-3zM1 6h8v1h-8zM10 6h1v1h-1zM0 7h9v1h-9zM11 7h1v1h-1zM13 7h2v1h-2zM0 8h8v1h-8zM9 8h2v1h-2zM12 8h1v1h-1zM0 9h8v1h-8zM9 9h3v1h-3zM13 9h1v1h-1zM0 10h7v1h-7zM8 10h4v1h-4zM13 10h2v1h-2z"/><path fill="#fff" d="M4 1h1v1h-1zM10 1h1v1h-1zM3 2h2v1h-2zM9 2h2v1h-2zM5 4h1v1h-1zM8 4h1v1h-1zM11 4h1v1h-1zM10 5h1v1h-1zM14 5h1v1h-1zM9 6h1v1h-1zM12 6h3v1h-3zM9 7h1v1h-1zM8 8h1v1h-1zM14 8h2v1h-2zM8 9h1v1h-1zM7 10h1v1h-1zM12 10h1v1h-1zM1 11h7v1h-7zM9 11h4v1h-4zM14 11h2v1h-2z"/></svg>
<svg style="left:601px;top:63px" width="17" height="16" viewBox="0 0 17 16" shape-rendering="crispEdges" ><path fill="#9d9da1" d="M2 0h2v1h-2zM11 0h5v1h-5zM1 1h4v1h-4zM11 1h5v1h-5zM0 2h6v1h-6zM12 2h4v1h-4zM0 3h6v1h-6zM13 3h3v1h-3zM0 4h5v1h-5zM14 4h2v1h-2zM1 5h3v1h-3zM13 5h3v1h-3zM0 6h5v1h-5zM7 6h9v1h-9zM0 7h6v1h-6zM7 7h9v1h-9zM0 8h16v1h-16zM0 9h16v1h-16zM0 10h16v1h-16zM1 11h15v1h-15zM2 12h14v1h-14zM12 13h4v1h-4zM13 14h3v1h-3z"/><path fill="#fff" d="M16 1h1v1h-1zM16 2h1v1h-1zM6 3h1v1h-1zM16 3h1v1h-1zM5 4h2v1h-2zM16 4h1v1h-1zM4 5h2v1h-2zM16 5h1v1h-1zM16 6h1v1h-1zM16 7h1v1h-1zM16 8h1v1h-1zM16 9h1v1h-1zM16 10h1v1h-1zM16 11h1v1h-1zM16 12h1v1h-1zM3 13h9v1h-9zM16 13h1v1h-1zM16 14h1v1h-1zM14 15h3v1h-3z"/></svg>
<svg style="left:624px;top:63px" width="17" height="14" viewBox="0 0 17 14" shape-rendering="crispEdges" ><path fill="#9d9da1" d="M8 0h3v1h-3zM7 1h1v1h-1zM11 1h1v1h-1zM7 2h1v1h-1zM11 2h1v1h-1zM2 3h2v1h-2zM8 3h3v1h-3zM1 4h1v1h-1zM4 4h5v1h-5zM13 4h1v1h-1zM6 5h7v1h-7zM5 6h4v1h-4zM4 7h1v1h-1zM6 7h3v1h-3zM3 8h1v1h-1zM6 8h4v1h-4zM2 9h1v1h-1zM5 9h2v1h-2zM9 9h2v1h-2zM0 10h2v1h-2zM4 10h2v1h-2zM10 10h1v1h-1zM1 11h1v1h-1zM3 11h2v1h-2zM10 11h3v1h-3zM2 12h2v1h-2z"/><path fill="#fff" d="M9 1h2v1h-2zM8 2h1v1h-1zM12 2h1v1h-1zM12 3h1v1h-1zM3 4h1v1h-1zM9 4h3v1h-3zM2 5h1v1h-1zM5 5h1v1h-1zM14 5h1v1h-1zM9 6h5v1h-5zM9 7h1v1h-1zM5 8h1v1h-1zM4 9h1v1h-1zM7 9h2v1h-2zM3 10h1v1h-1zM6 10h2v1h-2zM11 10h1v1h-1zM2 11h1v1h-1zM5 11h2v1h-2zM4 12h2v1h-2zM11 12h3v1h-3zM3 13h2v1h-2z"/></svg>
<svg style="left:647px;top:64px" width="17" height="14" viewBox="0 0 17 14" shape-rendering="crispEdges" ><path fill="#9d9da1" d="M2 0h1v1h-1zM4 0h2v1h-2zM7 0h2v1h-2zM10 0h2v1h-2zM1 1h1v1h-1zM3 1h1v1h-1zM5 1h1v1h-1zM7 1h1v1h-1zM9 1h1v1h-1zM11 1h1v1h-1zM1 2h1v1h-1zM3 2h1v1h-1zM5 2h1v1h-1zM7 2h1v1h-1zM9 2h1v1h-1zM11 2h1v1h-1zM1 3h1v1h-1zM3 3h1v1h-1zM5 3h1v1h-1zM7 3h1v1h-1zM9 3h1v1h-1zM11 3h1v1h-1zM1 4h1v1h-1zM3 4h1v1h-1zM5 4h1v1h-1zM7 4h1v1h-1zM9 4h1v1h-1zM11 4h1v1h-1zM2 5h2v1h-2zM5 5h2v1h-2zM8 5h2v1h-2zM11 5h1v1h-1zM10 7h1v1h-1zM9 8h3v1h-3zM8 9h5v1h-5zM7 10h7v1h-7zM6 11h9v1h-9zM6 12h9v1h-9z"/><path fill="#fff" d="M6 1h1v1h-1zM8 1h1v1h-1zM12 1h1v1h-1zM2 2h1v1h-1zM4 2h1v1h-1zM6 2h1v1h-1zM8 2h1v1h-1zM10 2h1v1h-1zM12 2h1v1h-1zM2 3h1v1h-1zM4 3h1v1h-1zM6 3h1v1h-1zM8 3h1v1h-1zM10 3h1v1h-1zM12 3h1v1h-1zM2 4h1v1h-1zM4 4h1v1h-1zM6 4h1v1h-1zM8 4h1v1h-1zM10 4h1v1h-1zM12 4h1v1h-1zM4 5h1v1h-1zM10 5h1v1h-1zM12 5h1v1h-1zM3 6h2v1h-2zM6 6h2v1h-2zM9 6h2v1h-2zM12 6h1v1h-1zM15 12h1v1h-1zM7 13h9v1h-9z"/></svg>
<svg style="left:679px;top:62px" width="18" height="18" viewBox="0 0 18 18" shape-rendering="auto"><path d="M1.5 9.5 L12 2 Q16 1.5 15.5 6 L14.5 15 Q12 17.5 8 15.5 Z" fill="#fff" transform="translate(1,1)"/><path d="M0.5 8.5 L11.5 1.5 Q15.5 1 15 5.5 L14 14.5 Q11.5 17 7.5 15 Z" fill="#9d9da1"/><path d="M4 7 l1.6 -.8 M7 5.4 l1.6 -.8 M12.5 3 l-1 1.4 M12 8.5 l1.6 0 M11.5 11 l1 1.4 M5 11 l1.4 1.2 M7.4 13 l1.4 1" stroke="#fff" stroke-width="1"/></svg>
<svg style="left:721px;top:62px" width="17" height="17" viewBox="0 0 17 17" shape-rendering="auto"><g transform="translate(1,1)" stroke="#fff" fill="none"><path d="M7.5 1.5 L1.5 4.5 L1.5 11.5 L7.5 14.5 L13.5 11.5 L13.5 4.5 Z M1.5 4.5 L7.5 7.5 L13.5 4.5 M7.5 7.5 L7.5 14.5"/></g><g stroke="#9d9da1" fill="none"><path d="M7.5 1.5 L1.5 4.5 L1.5 11.5 L7.5 14.5 L13.5 11.5 L13.5 4.5 Z M1.5 4.5 L7.5 7.5 L13.5 4.5 M7.5 7.5 L7.5 14.5"/></g></svg>
<svg style="left:743px;top:62px" width="17" height="17" viewBox="0 0 17 17" shape-rendering="auto"><g transform="translate(1,1)" stroke="#fff" fill="none"><path d="M8 0.5 L11 3.5 L5 3.5 Z M8 15.5 L11 12.5 L5 12.5 Z M0.5 8 L3.5 5 L3.5 11 Z M15.5 8 L12.5 5 L12.5 11 Z" fill="#9d9da1"/><path d="M8 4.5 L5 6 L5 10 L8 11.5 L11 10 L11 6 Z M5 6 L8 7.5 L11 6 M8 7.5 L8 11.5"/></g><g stroke="#9d9da1" fill="none"><path d="M8 0.5 L11 3.5 L5 3.5 Z M8 15.5 L11 12.5 L5 12.5 Z M0.5 8 L3.5 5 L3.5 11 Z M15.5 8 L12.5 5 L12.5 11 Z" fill="#9d9da1"/><path d="M8 4.5 L5 6 L5 10 L8 11.5 L11 10 L11 6 Z M5 6 L8 7.5 L11 6 M8 7.5 L8 11.5"/></g></svg>
<svg style="left:766px;top:62px" width="17" height="17" viewBox="0 0 17 17" shape-rendering="auto"><g transform="translate(1,1)" stroke="#fff" fill="none"><path d="M0.5 0.5 L4.5 0.5 M0.5 0.5 L0.5 4.5 M0.5 0.5 L4 4 M15.5 0.5 L11.5 0.5 M15.5 0.5 L15.5 4.5 M15.5 0.5 L12 4 M0.5 14.5 L4.5 14.5 M0.5 14.5 L0.5 10.5 M0.5 14.5 L4 11 M15.5 14.5 L11.5 14.5 M15.5 14.5 L15.5 10.5 M15.5 14.5 L12 11" stroke-width="1.6"/><path d="M8 2.5 L4.5 4.5 L4.5 10 L8 12.5 L11.5 10 L11.5 4.5 Z M4.5 4.5 L8 6.5 L11.5 4.5 M8 6.5 L8 12.5"/></g><g stroke="#9d9da1" fill="none"><path d="M0.5 0.5 L4.5 0.5 M0.5 0.5 L0.5 4.5 M0.5 0.5 L4 4 M15.5 0.5 L11.5 0.5 M15.5 0.5 L15.5 4.5 M15.5 0.5 L12 4 M0.5 14.5 L4.5 14.5 M0.5 14.5 L0.5 10.5 M0.5 14.5 L4 11 M15.5 14.5 L11.5 14.5 M15.5 14.5 L15.5 10.5 M15.5 14.5 L12 11" stroke-width="1.6"/><path d="M8 2.5 L4.5 4.5 L4.5 10 L8 12.5 L11.5 10 L11.5 4.5 Z M4.5 4.5 L8 6.5 L11.5 4.5 M8 6.5 L8 12.5"/></g></svg>
<svg style="left:789px;top:62px" width="17" height="17" viewBox="0 0 17 17" shape-rendering="auto"><g transform="translate(1,1)" stroke="#fff" fill="none"><circle cx="8" cy="8" r="7"/><ellipse cx="8" cy="8" rx="3" ry="7"/><path d="M1 8 L15 8 M2.5 4 L13.5 4 M2.5 12 L13.5 12"/></g><g stroke="#9d9da1" fill="none"><circle cx="8" cy="8" r="7"/><ellipse cx="8" cy="8" rx="3" ry="7"/><path d="M1 8 L15 8 M2.5 4 L13.5 4 M2.5 12 L13.5 12"/></g></svg>
<svg style="left:819px;top:62px" width="18" height="17" viewBox="0 0 18 17" shape-rendering="auto"><path d="M3 3 Q6 0.5 9 1.2 Q12 0.2 15 3 Q17.5 7 16.5 11 Q15 15.5 11 15.6 Q8 16.5 5 15.3 Q1 13 1 8 Q1 5 3 3Z" fill="#0000f8"/><path d="M12.5 1.5 Q16 3 17 7 Q17.3 11 15.5 14 Q13 16 11 15.6 Q14 13 14 8 Q14 4 12.5 1.5Z" fill="#000080"/><path d="M3 3.2 Q5 1.5 6.5 3.2 Q5 5.5 3 5.5 Z M6 15.2 Q8.5 14 10.5 15.4 Q8 16.6 6 15.2Z" fill="#fff"/><path d="M5 4.6 L7 3.4 L9 4.6 L11.4 3.8 L11 7 L8.8 8.4 L11 9 L10.6 12 L9.2 14 L8.4 11.6 L6.6 10.6 L7.6 8.6 L5.4 7.6 L4.4 5.6Z" fill="#00e800"/><path d="M14.6 4 L16.2 6.4 L16.2 8.2 L14.4 6Z" fill="#008000"/></svg>
<svg style="left:851px;top:63px" width="16" height="14" viewBox="0 0 16 14" shape-rendering="crispEdges" ><path fill="#ff0" d="M9 0h4v1h-4zM9 1h3v1h-3zM9 2h3v1h-3zM0 9h3v1h-3zM0 10h4v1h-4zM0 11h4v1h-4z"/><path fill="#ffff80" d="M12 1h1v1h-1z"/><path fill="#fff" d="M13 1h1v1h-1zM13 2h2v1h-2zM13 3h2v1h-2zM8 5h1v1h-1zM8 6h1v1h-1zM7 7h2v1h-2zM5 8h1v1h-1zM4 12h1v1h-1zM2 13h3v1h-3z"/><path fill="#808000" d="M12 2h1v1h-1zM8 3h4v1h-4zM6 4h1v1h-1zM4 7h1v1h-1zM3 8h1v1h-1zM3 9h1v1h-1zM4 10h1v1h-1zM4 11h1v1h-1zM1 12h3v1h-3z"/><path fill="#404040" d="M7 4h2v1h-2zM5 7h2v1h-2z"/><path fill="#080" d="M5 5h3v1h-3zM5 6h3v1h-3z"/></svg>
<svg style="left:873px;top:63px" width="17" height="15" viewBox="0 0 17 15" shape-rendering="crispEdges" ><path fill="#ff0" d="M1 0h4v1h-4zM0 1h6v1h-6zM0 2h2v1h-2zM3 2h3v1h-3zM0 3h1v1h-1zM2 3h2v1h-2zM1 4h3v1h-3zM2 5h2v1h-2zM2 6h2v1h-2zM2 7h2v1h-2zM2 8h2v1h-2zM2 9h2v1h-2zM2 10h2v1h-2zM1 11h4v1h-4zM0 12h6v1h-6zM0 13h2v1h-2zM3 13h2v1h-2zM1 14h1v1h-1z"/><path fill="#000" d="M7 0h10v1h-10zM7 1h10v1h-10zM7 2h2v1h-2zM15 2h2v1h-2zM7 3h2v1h-2zM15 3h2v1h-2zM7 4h2v1h-2zM15 4h2v1h-2zM7 5h2v1h-2zM15 5h2v1h-2zM7 6h2v1h-2zM15 6h2v1h-2zM7 7h2v1h-2zM15 7h2v1h-2zM7 8h2v1h-2zM15 8h2v1h-2zM7 9h2v1h-2zM15 9h2v1h-2zM7 10h2v1h-2zM15 10h2v1h-2zM7 11h2v1h-2zM15 11h2v1h-2zM7 12h10v1h-10zM7 13h10v1h-10z"/><path fill="#808000" d="M2 2h1v1h-1zM1 3h1v1h-1zM4 3h1v1h-1zM2 13h1v1h-1zM5 13h1v1h-1zM2 14h3v1h-3z"/><path fill="#9d9da1" d="M9 2h1v1h-1zM12 2h1v1h-1zM14 2h1v1h-1zM9 3h6v1h-6zM9 4h1v1h-1zM11 4h1v1h-1zM14 4h1v1h-1zM9 5h6v1h-6zM9 6h1v1h-1zM11 6h1v1h-1zM14 6h1v1h-1zM9 7h6v1h-6zM9 8h1v1h-1zM12 8h1v1h-1zM14 8h1v1h-1zM9 9h6v1h-6zM9 10h1v1h-1zM11 10h1v1h-1zM13 10h2v1h-2zM9 11h6v1h-6z"/><path fill="#f00" d="M10 2h2v1h-2zM13 2h1v1h-1z"/><path fill="#0f0" d="M10 4h1v1h-1zM12 4h2v1h-2z"/><path fill="#00f" d="M10 6h1v1h-1zM12 6h2v1h-2z"/><path fill="#fff" d="M10 8h2v1h-2zM13 8h1v1h-1zM10 10h1v1h-1zM12 10h1v1h-1z"/></svg>
<svg style="left:897px;top:62px" width="17" height="17" viewBox="0 0 17 17" shape-rendering="auto"><path d="M2.5 1 L2.5 16 M8.5 1 L8.5 16 M13.5 1 L13.5 16 M0 5.5 L16 5.5 M0 11.5 L16 11.5" stroke="#9d9da1" stroke-width="1" fill="none"/><path d="M5 3 L7 5 M10 3 L8.5 4.5 M5 8 L7 6.5" stroke="#ff0" stroke-width="1.2"/><path d="M7.5 5 L7.5 15 L10 12.5 L11.5 16 L13.2 15.2 L11.7 12 L15 12 Z" fill="#fff" stroke="#000" stroke-width="1"/></svg>
<svg style="left:921px;top:66px" width="16" height="11" viewBox="0 0 16 11" shape-rendering="crispEdges" ><path fill="#000" d="M2 0h1v1h-1zM4 0h2v1h-2zM8 0h2v1h-2zM2 1h1v1h-1zM5 1h1v1h-1zM7 1h1v1h-1zM10 1h1v1h-1zM2 2h1v1h-1zM5 2h1v1h-1zM7 2h1v1h-1zM10 2h1v1h-1zM2 3h1v1h-1zM5 3h1v1h-1zM7 3h1v1h-1zM10 3h1v1h-1zM2 4h1v1h-1zM4 4h3v1h-3zM8 4h2v1h-2zM2 5h1v1h-1zM2 6h1v1h-1zM2 7h1v1h-1zM7 7h1v1h-1zM12 7h1v1h-1zM0 8h1v1h-1zM2 8h1v1h-1zM4 8h1v1h-1zM7 8h1v1h-1zM9 8h1v1h-1zM12 8h1v1h-1zM14 8h1v1h-1zM0 9h16v1h-16zM0 10h16v1h-16z"/></svg>
<svg style="left:946px;top:62px" width="10" height="17" viewBox="0 0 10 17" shape-rendering="auto"><path d="M1 12.5 L8.5 12.5 L8.5 15.5 L1 15.5 Z M5.5 7 L8.5 7 L8.5 12 M5 9 L5 12.5" fill="none" stroke="#9d9da1" stroke-width="1"/><path d="M3 6 Q1.5 4 4 1.5 Q6.5 0 7.5 2 Q8 4.5 5.5 6.5 Q4 7.5 3 6 Z" fill="none" stroke="#f00" stroke-width="1.3"/></svg>
<svg style="left:966px;top:62px" width="18" height="17" viewBox="0 0 18 17" shape-rendering="auto"><path d="M5 2 L10 2 Q16 2.5 16 8.5 Q16 14.5 10 15 L5 15 L5 11.5 L9.5 11.5 Q12 11 12 8.5 Q12 6 9.5 5.5 L5 5.5 Z" fill="#f00" stroke="#000" stroke-width="1.2"/><path d="M5 2 L9 2 L9 5.5 L5 5.5 Z M5 11.5 L9 11.5 L9 15 L5 15 Z" fill="#fff" stroke="#000" stroke-width="1"/><path d="M13 12.5 Q15.5 11 15.8 8" stroke="#800000" stroke-width="1.2" fill="none"/><path d="M0.5 2.5 L3.5 2.5 M1 5 L3.5 5 M0.5 12 L3.5 12 M1 14.5 L3.5 14.5" stroke="#000" stroke-width="1"/></svg>
<svg style="left:989px;top:62px" width="17" height="17" viewBox="0 0 17 17" shape-rendering="auto"><path d="M5 1.5 L11 1.5 L13 2.5 L14 4 L15.5 6 L15 9 L15.5 11 L13.5 12.5 L12.5 14.5 L9 15.5 L5 15 L3 14 L2.5 12 L1 10.5 L1.5 8 L1 5.5 L2.5 4.5 L3 2.5Z" fill="#e0dfe3" stroke="#000" stroke-width="1.4"/><path d="M4 9 Q5 12.5 8 12.5 Q11 12.5 12 9" fill="none" stroke="#000" stroke-width="1.2"/><rect x="4" y="5.5" width="2" height="2" fill="none" stroke="#000" stroke-width=".8"/><rect x="11" y="5.5" width="2" height="2" fill="none" stroke="#000" stroke-width=".8"/><rect x="7.5" y="1" width="2" height="15" fill="#00f"/></svg>
<svg style="left:1012px;top:65px" width="12" height="11" viewBox="0 0 12 11" shape-rendering="auto"><g fill="none" stroke-width="2"><rect x="2" y="3" width="9" height="6" rx="3" stroke="#fff"/><rect x="1" y="2" width="9" height="6" rx="3" stroke="#9d9da1"/><rect x="8" y="1" width="9" height="6" rx="3" stroke="#9d9da1"/></g></svg>
<div class="grip" style="left:5px;top:91px;width:58px;height:2px;"></div>
<div class="grip" style="left:5px;top:95px;width:58px;height:2px;"></div>
<div class="grip" style="left:155px;top:91px;width:32px;height:2px;"></div>
<div class="grip" style="left:155px;top:95px;width:32px;height:2px;"></div>
<div class="t pw" style="left:63px;top:86px;transform-origin:0 0;transform:scaleX(0.9825);">Project Workspace</div>
<div class="btn" style="left:188px;top:88px;width:12px;height:12px;"><svg style="left:1px;top:1px" width="9" height="9" viewBox="0 0 9 9"><path d="M1.5 6 L7.5 6 L4.5 3 Z" fill="#000"/></svg></div>
<div class="btn" style="left:202px;top:88px;width:12px;height:12px;"><svg style="left:1px;top:1px" width="9" height="9" viewBox="0 0 9 9"><path d="M1.5 2.2 L7 7 M7 2.2 L1.5 7" stroke="#000" stroke-width="1.7"/></svg></div>
<div style="left:4px;top:103px;width:205px;height:305px;background:#bdbdbd;border:1px solid #000;border-right:1px solid #e6e6ec;border-bottom:1px solid #fff;"></div>
<div style="left:209px;top:103px;width:1px;height:306px;background:#fff;"></div>
<div style="left:210px;top:103px;width:1px;height:306px;background:#ececf0;"></div>
<div style="left:5px;top:104px;width:203px;height:17px;background:#a9a9a9;border-right:1px solid #000;"></div>
<div style="left:5px;top:121px;width:203px;height:1px;background:#000;"></div>
<svg style="left:5px;top:104px" width="100" height="19" viewBox="0 0 100 19" shape-rendering="auto"><path d="M24.5 1.5 L75 1.5 L81.5 17.5 L24.5 17.5 Z" fill="#e0dfe3" stroke="#000" stroke-width="1"/><path d="M0 18 L0 0 L20.5 0 L28.5 18 Z" fill="#fbfbfd"/><path d="M1.5 18 L1.5 1.5 L20.5 1.5 L28 18" fill="none" stroke="#fff" stroke-width="1"/><path d="M21.5 1.5 L29 18" stroke="#000" stroke-width="1.3"/></svg>
<div class="t" style="left:10px;top:107px;transform-origin:0 0;transform:scaleX(0.9400);">All</div>
<div class="t" style="left:32.8px;top:107px;transform-origin:0 0;transform:scaleX(0.9693);">Selected</div>
<div style="left:191px;top:104px;width:17px;height:17px;border:1px solid;border-color:#fff #808080 #808080 #fff;background:#e0dfe3;"><svg style="left:4px;top:4px" width="6" height="9" viewBox="0 0 6 9"><path d="M1 0.5 L5 4 L1 7.5 Z" fill="#000"/></svg></div>
<div class="row" style="left:17px;top:122px;width:191px;height:18px;"></div>
<div class="t tr" style="left:38.4px;top:125px;transform-origin:0 0;transform:scaleX(0.9598);">Dragon Sword</div>
<div class="row" style="left:27px;top:140px;width:181px;height:18px;"></div>
<div class="t tr" style="left:48.4px;top:143px;transform-origin:0 0;transform:scaleX(0.9147);">Images</div>
<div class="row" style="left:27px;top:158px;width:181px;height:18px;"></div>
<div class="t tr" style="left:48.4px;top:161px;transform-origin:0 0;transform:scaleX(0.9380);">Sounds</div>
<div class="row" style="left:27px;top:176px;width:181px;height:18px;"></div>
<div class="t tr" style="left:48.4px;top:179px;transform-origin:0 0;transform:scaleX(0.9255);">Materials</div>
<div class="row" style="left:27px;top:194px;width:181px;height:18px;"></div>
<div class="t tr" style="left:48.4px;top:197px;transform-origin:0 0;transform:scaleX(0.9624);">Post Effects</div>
<div class="row" style="left:27px;top:212px;width:181px;height:18px;"></div>
<div class="t tr" style="left:48.4px;top:215px;transform-origin:0 0;transform:scaleX(0.9465);">Objects</div>
<div class="row" style="left:37px;top:230px;width:171px;height:18px;"></div>
<div style="left:57px;top:232px;width:72px;height:14px;background:#b7b7cb;border:1px dotted #000;"></div>
<div class="t tr" style="left:58.4px;top:233px;transform-origin:0 0;transform:scaleX(0.9527);">Dragon Sword</div>
<div class="row" style="left:47px;top:248px;width:161px;height:18px;"></div>
<div class="t tr" style="left:68.4px;top:251px;transform-origin:0 0;transform:scaleX(0.9422);">Bones</div>
<div class="row" style="left:27px;top:266px;width:181px;height:18px;"></div>
<div class="t tr" style="left:47.8px;top:269px;transform-origin:0 0;transform:scaleX(0.9701);">Actions</div>
<div class="row" style="left:27px;top:284px;width:181px;height:18px;"></div>
<div class="t tr" style="left:48.4px;top:287px;transform-origin:0 0;transform:scaleX(0.9325);">Choreographies</div>
<div style="left:5px;top:126px;width:9px;height:9px;background:#fff;border:1px solid #000;"><div style="left:1px;top:3px;width:5px;height:1px;background:#000"></div></div>
<div style="left:15px;top:180px;width:9px;height:9px;background:#fff;border:1px solid #000;"><div style="left:1px;top:3px;width:5px;height:1px;background:#000"></div><div style="left:3px;top:1px;width:1px;height:5px;background:#000"></div></div>
<div style="left:15px;top:216px;width:9px;height:9px;background:#fff;border:1px solid #000;"><div style="left:1px;top:3px;width:5px;height:1px;background:#000"></div></div>
<div style="left:25px;top:234px;width:9px;height:9px;background:#fff;border:1px solid #000;"><div style="left:1px;top:3px;width:5px;height:1px;background:#000"></div></div>
<svg style="left:21px;top:123px" width="15" height="16" viewBox="0 0 15 16" shape-rendering="crispEdges" ><path fill="#000" d="M0 0h9v1h-9zM0 1h1v1h-1zM8 1h2v1h-2zM0 2h1v1h-1zM8 2h1v1h-1zM10 2h1v1h-1zM0 3h1v1h-1zM8 3h1v1h-1zM11 3h1v1h-1zM0 4h1v1h-1zM2 4h1v1h-1zM8 4h5v1h-5zM0 5h1v1h-1zM2 5h1v1h-1zM5 5h1v1h-1zM12 5h1v1h-1zM0 6h1v1h-1zM2 6h1v1h-1zM5 6h1v1h-1zM12 6h1v1h-1zM0 7h1v1h-1zM2 7h1v1h-1zM12 7h1v1h-1zM0 8h1v1h-1zM2 8h1v1h-1zM8 8h7v1h-7zM0 9h1v1h-1zM2 9h1v1h-1zM8 9h1v1h-1zM14 9h1v1h-1zM0 10h1v1h-1zM2 10h1v1h-1zM8 10h1v1h-1zM14 10h1v1h-1zM0 11h1v1h-1zM8 11h1v1h-1zM14 11h1v1h-1zM0 12h1v1h-1zM8 12h1v1h-1zM14 12h1v1h-1zM0 13h9v1h-9zM11 13h2v1h-2zM14 13h1v1h-1zM1 14h9v1h-9zM11 14h2v1h-2zM14 14h1v1h-1zM10 15h5v1h-5z"/><path fill="#fff" d="M1 1h7v1h-7zM3 2h5v1h-5zM9 2h1v1h-1zM4 3h4v1h-4zM9 3h2v1h-2zM1 4h1v1h-1zM5 4h3v1h-3zM1 5h1v1h-1zM6 5h6v1h-6zM1 6h1v1h-1zM3 6h2v1h-2zM8 6h4v1h-4zM1 7h1v1h-1zM3 7h3v1h-3zM8 7h4v1h-4zM1 8h1v1h-1zM3 8h5v1h-5zM1 9h1v1h-1zM5 9h3v1h-3zM1 10h1v1h-1zM5 10h3v1h-3zM10 10h3v1h-3zM1 11h2v1h-2zM5 11h3v1h-3zM10 11h3v1h-3zM1 12h7v1h-7z"/><path fill="#00f" d="M1 2h2v1h-2zM1 3h2v1h-2zM3 9h2v1h-2zM3 10h2v1h-2zM3 11h2v1h-2z"/><path fill="#f00" d="M3 3h1v1h-1zM3 4h2v1h-2zM3 5h2v1h-2z"/><path fill="#800080" d="M6 6h2v1h-2zM6 7h2v1h-2z"/><path fill="#808080" d="M9 9h5v1h-5zM9 10h1v1h-1zM13 10h1v1h-1zM9 11h1v1h-1zM13 11h1v1h-1zM9 12h5v1h-5zM9 13h2v1h-2zM13 13h1v1h-1zM10 14h1v1h-1zM13 14h1v1h-1z"/></svg>
<svg style="left:31px;top:142px" width="15" height="13" viewBox="0 0 15 13" shape-rendering="crispEdges" ><path fill="#808080" d="M6 0h1v1h-1zM7 1h1v1h-1z"/><path fill="#ff0" d="M1 1h4v1h-4zM0 3h14v1h-14zM0 4h14v1h-14zM0 5h14v1h-14zM0 6h14v1h-14zM0 7h14v1h-14zM0 8h14v1h-14zM0 9h14v1h-14zM0 10h14v1h-14zM0 11h14v1h-14z"/><path fill="#fff" d="M0 2h14v1h-14z"/><path fill="#000" d="M14 3h1v1h-1zM14 4h1v1h-1zM14 5h1v1h-1zM14 6h1v1h-1zM14 7h1v1h-1zM14 8h1v1h-1zM14 9h1v1h-1zM14 10h1v1h-1zM14 11h1v1h-1zM1 12h14v1h-14z"/></svg>
<svg style="left:31px;top:145px" width="14" height="7" viewBox="0 0 14 7" shape-rendering="crispEdges" ><path fill="#000" d="M1 1h12v1h-12zM1 2h1v1h-1zM12 2h1v1h-1zM1 3h1v1h-1zM12 3h1v1h-1zM1 4h4v1h-4zM6 4h7v1h-7zM1 5h1v1h-1zM12 5h1v1h-1zM1 6h12v1h-12z"/><path fill="#0ff" d="M2 2h2v1h-2zM5 2h2v1h-2zM8 2h2v1h-2z"/><path fill="#fff" d="M4 2h1v1h-1zM7 2h1v1h-1zM10 2h2v1h-2zM2 3h2v1h-2zM7 3h5v1h-5z"/><path fill="#0f0" d="M4 3h3v1h-3zM5 4h1v1h-1zM5 5h1v1h-1z"/><path fill="#808080" d="M2 5h2v1h-2zM6 5h1v1h-1zM9 5h3v1h-3z"/><path fill="#c8c8c8" d="M4 5h1v1h-1zM7 5h2v1h-2z"/></svg>
<svg style="left:31px;top:160px" width="15" height="13" viewBox="0 0 15 13" shape-rendering="crispEdges" ><path fill="#808080" d="M6 0h1v1h-1zM7 1h1v1h-1z"/><path fill="#ff0" d="M1 1h4v1h-4zM0 3h14v1h-14zM0 4h14v1h-14zM0 5h14v1h-14zM0 6h14v1h-14zM0 7h14v1h-14zM0 8h14v1h-14zM0 9h14v1h-14zM0 10h14v1h-14zM0 11h14v1h-14z"/><path fill="#fff" d="M0 2h14v1h-14z"/><path fill="#000" d="M14 3h1v1h-1zM14 4h1v1h-1zM14 5h1v1h-1zM14 6h1v1h-1zM14 7h1v1h-1zM14 8h1v1h-1zM14 9h1v1h-1zM14 10h1v1h-1zM14 11h1v1h-1zM1 12h14v1h-14z"/></svg>
<svg style="left:31px;top:163px" width="14" height="7" viewBox="0 0 14 7" shape-rendering="crispEdges" ><path fill="#000" d="M3 2h1v1h-1zM6 2h1v1h-1zM11 2h1v1h-1zM2 3h2v1h-2zM5 3h2v1h-2zM8 3h1v1h-1zM10 3h2v1h-2zM13 3h1v1h-1zM0 4h14v1h-14zM2 5h2v1h-2zM5 5h2v1h-2zM8 5h1v1h-1zM10 5h2v1h-2zM13 5h1v1h-1zM3 6h1v1h-1zM6 6h1v1h-1zM11 6h1v1h-1z"/></svg>
<svg style="left:31px;top:178px" width="15" height="13" viewBox="0 0 15 13" shape-rendering="crispEdges" ><path fill="#808080" d="M6 0h1v1h-1zM7 1h1v1h-1z"/><path fill="#ff0" d="M1 1h4v1h-4zM0 3h14v1h-14zM0 4h14v1h-14zM0 5h14v1h-14zM0 6h14v1h-14zM0 7h14v1h-14zM0 8h14v1h-14zM0 9h14v1h-14zM0 10h14v1h-14zM0 11h14v1h-14z"/><path fill="#fff" d="M0 2h14v1h-14z"/><path fill="#000" d="M14 3h1v1h-1zM14 4h1v1h-1zM14 5h1v1h-1zM14 6h1v1h-1zM14 7h1v1h-1zM14 8h1v1h-1zM14 9h1v1h-1zM14 10h1v1h-1zM14 11h1v1h-1zM1 12h14v1h-14z"/></svg>
<svg style="left:31px;top:181px" width="14" height="7" viewBox="0 0 14 7" shape-rendering="crispEdges" ><path fill="#f00" d="M3 1h3v1h-3zM3 2h3v1h-3zM2 3h3v1h-3zM2 4h3v1h-3zM1 5h3v1h-3zM1 6h3v1h-3z"/><path fill="#0f0" d="M6 1h3v1h-3zM6 2h3v1h-3zM5 3h3v1h-3zM5 4h3v1h-3zM4 5h3v1h-3zM4 6h3v1h-3z"/><path fill="#00f" d="M9 1h3v1h-3zM9 2h3v1h-3zM8 3h3v1h-3zM8 4h3v1h-3zM7 5h3v1h-3zM7 6h3v1h-3z"/></svg>
<svg style="left:31px;top:196px" width="15" height="13" viewBox="0 0 15 13" shape-rendering="crispEdges" ><path fill="#808080" d="M6 0h1v1h-1zM7 1h1v1h-1z"/><path fill="#ff0" d="M1 1h4v1h-4zM0 3h14v1h-14zM0 4h14v1h-14zM0 5h14v1h-14zM0 6h14v1h-14zM0 7h14v1h-14zM0 8h14v1h-14zM0 9h14v1h-14zM0 10h14v1h-14zM0 11h14v1h-14z"/><path fill="#fff" d="M0 2h14v1h-14z"/><path fill="#000" d="M14 3h1v1h-1zM14 4h1v1h-1zM14 5h1v1h-1zM14 6h1v1h-1zM14 7h1v1h-1zM14 8h1v1h-1zM14 9h1v1h-1zM14 10h1v1h-1zM14 11h1v1h-1zM1 12h14v1h-14z"/></svg>
<svg style="left:31px;top:199px" width="14" height="7" viewBox="0 0 14 7" shape-rendering="crispEdges" ><path fill="#000" d="M0 2h3v1h-3zM4 2h3v1h-3zM8 2h6v1h-6zM0 3h1v1h-1zM2 3h1v1h-1zM4 3h1v1h-1zM6 3h1v1h-1zM8 3h1v1h-1zM12 3h1v1h-1zM0 4h3v1h-3zM4 4h1v1h-1zM6 4h1v1h-1zM8 4h3v1h-3zM12 4h1v1h-1zM0 5h1v1h-1zM4 5h1v1h-1zM6 5h1v1h-1zM10 5h1v1h-1zM12 5h1v1h-1zM0 6h1v1h-1zM4 6h3v1h-3zM8 6h3v1h-3zM12 6h1v1h-1z"/></svg>
<svg style="left:31px;top:214px" width="15" height="13" viewBox="0 0 15 13" shape-rendering="crispEdges" ><path fill="#808080" d="M6 0h1v1h-1zM7 1h1v1h-1z"/><path fill="#ff0" d="M1 1h4v1h-4zM0 3h14v1h-14zM0 4h14v1h-14zM0 5h14v1h-14zM0 6h14v1h-14zM0 7h14v1h-14zM0 8h14v1h-14zM0 9h14v1h-14zM0 10h14v1h-14zM0 11h14v1h-14z"/><path fill="#fff" d="M0 2h14v1h-14z"/><path fill="#000" d="M14 3h1v1h-1zM14 4h1v1h-1zM14 5h1v1h-1zM14 6h1v1h-1zM14 7h1v1h-1zM14 8h1v1h-1zM14 9h1v1h-1zM14 10h1v1h-1zM14 11h1v1h-1zM1 12h14v1h-14z"/></svg>
<svg style="left:31px;top:215px" width="14" height="10" viewBox="0 0 14 10" shape-rendering="crispEdges" ><path fill="#0ff" d="M4 0h2v1h-2zM3 1h4v1h-4zM2 2h8v1h-8zM3 3h6v1h-6zM5 4h2v1h-2z"/><path fill="#000080" d="M2 3h1v1h-1zM2 4h3v1h-3zM2 5h4v1h-4zM2 6h4v1h-4zM2 7h4v1h-4zM3 8h3v1h-3zM5 9h1v1h-1z"/><path fill="#00f" d="M9 3h1v1h-1zM7 4h3v1h-3zM6 5h4v1h-4zM6 6h4v1h-4zM6 7h4v1h-4zM6 8h3v1h-3zM6 9h1v1h-1z"/></svg>
<svg style="left:42px;top:231px" width="14" height="16" viewBox="0 0 14 16" shape-rendering="crispEdges" ><path fill="#000" d="M6 0h3v1h-3zM5 1h1v1h-1zM9 1h1v1h-1zM4 2h1v1h-1zM10 2h1v1h-1zM4 3h1v1h-1zM10 3h1v1h-1zM5 4h1v1h-1zM9 4h1v1h-1zM5 5h2v1h-2zM8 5h1v1h-1zM5 6h2v1h-2zM8 6h1v1h-1zM2 7h3v1h-3zM10 7h3v1h-3zM1 8h1v1h-1zM12 8h1v1h-1zM0 9h1v1h-1zM3 9h2v1h-2zM9 9h2v1h-2zM12 9h1v1h-1zM1 10h2v1h-2zM4 10h1v1h-1zM10 10h2v1h-2zM2 11h2v1h-2zM6 11h2v1h-2zM10 11h2v1h-2zM2 12h1v1h-1zM7 12h1v1h-1zM10 12h3v1h-3zM1 13h1v1h-1zM6 13h2v1h-2zM12 13h1v1h-1zM1 14h1v1h-1zM6 14h2v1h-2zM12 14h1v1h-1zM1 15h12v1h-12z"/><path fill="#ff0" d="M6 1h3v1h-3zM5 2h5v1h-5zM5 3h5v1h-5zM6 4h3v1h-3zM7 5h1v1h-1zM7 6h1v1h-1zM5 7h5v1h-5zM2 8h10v1h-10zM1 9h2v1h-2zM5 9h4v1h-4zM11 9h1v1h-1zM5 10h5v1h-5zM4 11h2v1h-2zM8 11h2v1h-2zM3 12h3v1h-3zM8 12h2v1h-2zM2 13h4v1h-4zM8 13h4v1h-4zM2 14h4v1h-4zM8 14h4v1h-4z"/><path fill="#fff" d="M3 10h1v1h-1zM6 12h1v1h-1z"/></svg>
<svg style="left:51px;top:250px" width="15" height="13" viewBox="0 0 15 13" shape-rendering="crispEdges" ><path fill="#808080" d="M6 0h1v1h-1zM7 1h1v1h-1z"/><path fill="#ff0" d="M1 1h4v1h-4zM0 3h14v1h-14zM0 4h14v1h-14zM0 5h14v1h-14zM0 6h14v1h-14zM0 7h14v1h-14zM0 8h14v1h-14zM0 9h14v1h-14zM0 10h14v1h-14zM0 11h14v1h-14z"/><path fill="#fff" d="M0 2h14v1h-14z"/><path fill="#000" d="M14 3h1v1h-1zM14 4h1v1h-1zM14 5h1v1h-1zM14 6h1v1h-1zM14 7h1v1h-1zM14 8h1v1h-1zM14 9h1v1h-1zM14 10h1v1h-1zM14 11h1v1h-1zM1 12h14v1h-14z"/></svg>
<svg style="left:51px;top:253px" width="14" height="7" viewBox="0 0 14 7" shape-rendering="crispEdges" ><path fill="#000" d="M2 2h2v1h-2zM9 2h2v1h-2zM1 3h1v1h-1zM4 3h5v1h-5zM11 3h1v1h-1zM1 4h1v1h-1zM11 4h1v1h-1zM1 5h1v1h-1zM4 5h5v1h-5zM11 5h1v1h-1zM2 6h2v1h-2zM9 6h2v1h-2z"/><path fill="#fff" d="M2 3h2v1h-2zM9 3h2v1h-2zM2 4h9v1h-9zM2 5h2v1h-2zM9 5h2v1h-2z"/></svg>
<svg style="left:31px;top:268px" width="15" height="13" viewBox="0 0 15 13" shape-rendering="crispEdges" ><path fill="#808080" d="M6 0h1v1h-1zM7 1h1v1h-1z"/><path fill="#ff0" d="M1 1h4v1h-4zM0 3h14v1h-14zM0 4h14v1h-14zM0 5h14v1h-14zM0 6h14v1h-14zM0 7h14v1h-14zM0 8h14v1h-14zM0 9h14v1h-14zM0 10h14v1h-14zM0 11h14v1h-14z"/><path fill="#fff" d="M0 2h14v1h-14z"/><path fill="#000" d="M14 3h1v1h-1zM14 4h1v1h-1zM14 5h1v1h-1zM14 6h1v1h-1zM14 7h1v1h-1zM14 8h1v1h-1zM14 9h1v1h-1zM14 10h1v1h-1zM14 11h1v1h-1zM1 12h14v1h-14z"/></svg>
<svg style="left:31px;top:269px" width="14" height="10" viewBox="0 0 14 10" shape-rendering="crispEdges" ><path fill="#000" d="M6 0h3v1h-3zM5 1h1v1h-1zM9 1h1v1h-1zM5 2h1v1h-1zM9 2h1v1h-1zM5 3h1v1h-1zM9 3h1v1h-1zM2 4h2v1h-2zM6 4h3v1h-3zM11 4h1v1h-1zM1 5h1v1h-1zM4 5h7v1h-7zM12 5h1v1h-1zM0 6h1v1h-1zM5 6h3v1h-3zM5 7h4v1h-4zM4 8h2v1h-2zM8 8h2v1h-2zM3 9h2v1h-2zM9 9h1v1h-1z"/><path fill="#fff" d="M6 1h3v1h-3zM6 2h3v1h-3zM6 3h3v1h-3z"/></svg>
<svg style="left:31px;top:286px" width="15" height="13" viewBox="0 0 15 13" shape-rendering="crispEdges" ><path fill="#808080" d="M6 0h1v1h-1zM7 1h1v1h-1z"/><path fill="#ff0" d="M1 1h4v1h-4zM0 3h14v1h-14zM0 4h14v1h-14zM0 5h14v1h-14zM0 6h14v1h-14zM0 7h14v1h-14zM0 8h14v1h-14zM0 9h14v1h-14zM0 10h14v1h-14zM0 11h14v1h-14z"/><path fill="#fff" d="M0 2h14v1h-14z"/><path fill="#000" d="M14 3h1v1h-1zM14 4h1v1h-1zM14 5h1v1h-1zM14 6h1v1h-1zM14 7h1v1h-1zM14 8h1v1h-1zM14 9h1v1h-1zM14 10h1v1h-1zM14 11h1v1h-1zM1 12h14v1h-14z"/></svg>
<svg style="left:31px;top:289px" width="14" height="8" viewBox="0 0 14 8" shape-rendering="crispEdges" ><path fill="#000" d="M9 1h1v1h-1zM8 2h1v1h-1zM10 4h3v1h-3zM8 6h1v1h-1zM9 7h1v1h-1z"/><path fill="#00f" d="M3 2h2v1h-2zM6 2h1v1h-1zM1 3h3v1h-3zM5 3h1v1h-1zM7 3h1v1h-1zM0 4h6v1h-6zM7 4h2v1h-2zM1 5h5v1h-5zM7 5h1v1h-1zM3 6h2v1h-2zM6 6h1v1h-1z"/><path fill="#000080" d="M5 2h1v1h-1zM6 3h1v1h-1zM6 4h1v1h-1zM6 5h1v1h-1zM5 6h1v1h-1z"/><path fill="#fff" d="M4 3h1v1h-1z"/></svg>
<div style="left:5px;top:390px;width:203px;height:17px;background:linear-gradient(to bottom,#e4e5ef 0%,#f2f2f8 40%,#fdfdfe 100%);"></div>
<div style="left:5px;top:391px;width:17px;height:15px;background:linear-gradient(to bottom,#efeee8,#e5e4dc);border:1px solid #fbfbf2;border-radius:3px;box-shadow:0 0 0 1px rgba(214,212,196,.55);"><svg style="left:1px;top:0px" width="12" height="13" viewBox="0 0 12 13" shape-rendering="auto"><path d="M7 3 L3.5 6.5 L7 10" fill="none" stroke="#c2c2ba" stroke-width="2"/></svg></div>
<div style="left:191px;top:391px;width:17px;height:15px;background:linear-gradient(to bottom,#efeee8,#e5e4dc);border:1px solid #fbfbf2;border-radius:3px;box-shadow:0 0 0 1px rgba(214,212,196,.55);"><svg style="left:1px;top:0px" width="12" height="13" viewBox="0 0 12 13" shape-rendering="auto"><path d="M4.5 3 L8 6.5 L4.5 10" fill="none" stroke="#c2c2ba" stroke-width="2"/></svg></div>
<div style="left:214px;top:103px;width:2px;height:305px;background:#000;width:1px;"></div>
<div style="left:0px;top:417px;width:219px;height:1px;background:#000;"></div>
<div style="left:0px;top:416px;width:219px;height:1px;background:#fff;"></div>
<div style="left:0px;top:410px;width:219px;height:1px;background:#fff;"></div>
<div class="grip" style="left:5px;top:425px;width:80px;height:2px;"></div>
<div class="grip" style="left:5px;top:429px;width:80px;height:2px;"></div>
<div class="grip" style="left:133px;top:425px;width:54px;height:2px;"></div>
<div class="grip" style="left:133px;top:429px;width:54px;height:2px;"></div>
<div class="t pw" style="left:85.4px;top:420px;transform-origin:0 0;transform:scaleX(0.9374);">Properties</div>
<div class="btn" style="left:188px;top:421px;width:12px;height:12px;"><svg style="left:1px;top:1px" width="9" height="9" viewBox="0 0 9 9"><path d="M1.5 6 L7.5 6 L4.5 3 Z" fill="#000"/></svg></div>
<div class="btn" style="left:202px;top:421px;width:12px;height:12px;"><svg style="left:1px;top:1px" width="9" height="9" viewBox="0 0 9 9"><path d="M1.5 2.2 L7 7 M7 2.2 L1.5 7" stroke="#000" stroke-width="1.7"/></svg></div>
<div style="left:4px;top:435px;width:210px;height:253px;background:#bdbdbd;border-left:2px solid #808080;border-top:1px solid #808080;border-right:1px solid #f0efe4;border-bottom:1px solid #f0efe4;"></div>
<div style="left:6px;top:436px;width:207px;height:20px;background:#e0dfe3;border-bottom:1px solid #9d9da1;border-left:1px solid #fff;"></div>
<div style="left:6px;top:456px;width:207px;height:145px;background:repeating-linear-gradient(to bottom,#f4f3f9 0px,#f4f3f9 4px,#ebeaf0 4px,#ebeaf0 13px,#f4f3f9 13px,#f4f3f9 18px);border-left:2px solid #fff;border-right:3px solid #f4f3f9;"></div>
<div style="left:6px;top:600px;width:208px;height:2px;background:#fff;border-bottom:1px solid #9d9da1;border-right:1px solid #9d9da1"></div>
<div style="left:212px;top:436px;width:1px;height:165px;background:#fff;"></div>
<div style="left:213px;top:436px;width:1px;height:166px;background:#9d9da1;"></div>
<div style="left:36px;top:439px;width:71px;height:15px;background:#b7b7cb;border:1px dotted #000;"></div>
<div class="t tr" style="left:37.5px;top:440px;transform-origin:0 0;transform:scaleX(0.9669);">Dragon Sword</div>
<svg style="left:26px;top:442px" width="10" height="8" viewBox="0 0 10 8" shape-rendering="auto"><path d="M0.5 1 L9 1 L4.75 6.5 Z" fill="#fff" stroke="#000" stroke-width="1"/></svg>
<svg style="left:10px;top:439px" width="14" height="16" viewBox="0 0 14 16" shape-rendering="crispEdges" ><path fill="#000" d="M6 0h3v1h-3zM5 1h1v1h-1zM9 1h1v1h-1zM4 2h1v1h-1zM10 2h1v1h-1zM4 3h1v1h-1zM10 3h1v1h-1zM5 4h1v1h-1zM9 4h1v1h-1zM5 5h2v1h-2zM8 5h1v1h-1zM5 6h2v1h-2zM8 6h1v1h-1zM2 7h3v1h-3zM10 7h3v1h-3zM1 8h1v1h-1zM12 8h1v1h-1zM0 9h1v1h-1zM3 9h2v1h-2zM9 9h2v1h-2zM12 9h1v1h-1zM1 10h2v1h-2zM4 10h1v1h-1zM10 10h2v1h-2zM2 11h2v1h-2zM6 11h2v1h-2zM10 11h2v1h-2zM2 12h1v1h-1zM7 12h1v1h-1zM10 12h3v1h-3zM1 13h1v1h-1zM6 13h2v1h-2zM12 13h1v1h-1zM1 14h1v1h-1zM6 14h2v1h-2zM12 14h1v1h-1zM1 15h12v1h-12z"/><path fill="#ff0" d="M6 1h3v1h-3zM5 2h5v1h-5zM5 3h5v1h-5zM6 4h3v1h-3zM7 5h1v1h-1zM7 6h1v1h-1zM5 7h5v1h-5zM2 8h10v1h-10zM1 9h2v1h-2zM5 9h4v1h-4zM11 9h1v1h-1zM5 10h5v1h-5zM4 11h2v1h-2zM8 11h2v1h-2zM3 12h3v1h-3zM8 12h2v1h-2zM2 13h4v1h-4zM8 13h4v1h-4zM2 14h4v1h-4zM8 14h4v1h-4z"/><path fill="#fff" d="M3 10h1v1h-1zM6 12h1v1h-1z"/></svg>
<svg style="left:14px;top:459px" width="7" height="11" viewBox="0 0 7 11" shape-rendering="auto"><path d="M1 1 L5.5 5.5 L1 10 Z" fill="none" stroke="#000" stroke-width="1"/></svg>
<div class="t tr" style="left:24.4px;top:458px;transform-origin:0 0;transform:scaleX(0.9574);">Bone Position</div>
<svg style="left:14px;top:477px" width="7" height="11" viewBox="0 0 7 11" shape-rendering="auto"><path d="M1 1 L5.5 5.5 L1 10 Z" fill="none" stroke="#000" stroke-width="1"/></svg>
<div class="t tr" style="left:24.4px;top:476px;transform-origin:0 0;transform:scaleX(0.9393);">Transform</div>
<div class="t tr" style="left:13.1px;top:494px;transform-origin:0 0;transform:scaleX(0.9642);">Ignore Fog</div>
<div class="t tr" style="left:185px;top:494px;transform-origin:0 0;transform:scaleX(0.8636);">OFF</div>
<div class="t tr" style="left:13.1px;top:512px;transform-origin:0 0;transform:scaleX(0.9586);">Animate Mode</div>
<div class="t tr" style="left:169px;top:512px;color:#9a9a9a;transform-origin:0 0;transform:scaleX(0.9168);">-not set-</div>
<svg style="left:14px;top:531px" width="7" height="11" viewBox="0 0 7 11" shape-rendering="auto"><path d="M1 1 L5.5 5.5 L1 10 Z" fill="none" stroke="#000" stroke-width="1"/></svg>
<div class="t tr" style="left:24.4px;top:530px;transform-origin:0 0;transform:scaleX(0.9453);">File Info</div>
<svg style="left:14px;top:549px" width="7" height="11" viewBox="0 0 7 11" shape-rendering="auto"><path d="M1 1 L5.5 5.5 L1 10 Z" fill="none" stroke="#000" stroke-width="1"/></svg>
<div class="t tr" style="left:24.4px;top:548px;transform-origin:0 0;transform:scaleX(0.9678);">Surface</div>
<svg style="left:14px;top:567px" width="7" height="11" viewBox="0 0 7 11" shape-rendering="auto"><path d="M1 1 L5.5 5.5 L1 10 Z" fill="none" stroke="#000" stroke-width="1"/></svg>
<div class="t tr" style="left:24.4px;top:566px;transform-origin:0 0;transform:scaleX(0.9493);">Options</div>
<svg style="left:14px;top:585px" width="7" height="11" viewBox="0 0 7 11" shape-rendering="auto"><path d="M1 1 L5.5 5.5 L1 10 Z" fill="none" stroke="#000" stroke-width="1"/></svg>
<div class="t tr" style="left:24.4px;top:584px;transform-origin:0 0;transform:scaleX(0.9429);">Plugin Properties</div>
<div style="left:222px;top:87px;width:2px;height:602px;background:#000;width:1px;left:223px;"></div>
<div style="left:218px;top:87px;width:1px;height:602px;background:#fff;"></div>
<div style="left:219px;top:87px;width:1px;height:602px;background:#ececf0;"></div>
<div style="left:225px;top:88px;width:16px;height:16px;border:1px solid;border-color:#fff #000 #000 #fff;background:#e0dfe3;"><svg style="left:3px;top:5px" width="8" height="5" viewBox="0 0 8 5"><path d="M0 0 L8 0 L4 4.5 Z" fill="#000"/></svg></div>
<div style="left:243px;top:88px;width:749px;height:16px;background:#fff;border-top:2px solid #85837c;border-left:1px solid #716f64;border-bottom:2px solid #f4f0e0;border-right:1px solid #f4f0e0;"></div>
<div style="left:226px;top:107px;width:15px;height:582px;background:#fff;border-left:1px solid #716f64;border-top:1px solid #716f64;border-right:2px solid #f4f0e0;"></div>
<div style="left:248px;top:99px;width:1px;height:2px;background:#000"></div><div style="left:257px;top:91px;width:1px;height:10px;background:#000"></div><div class="t" style="left:259px;top:89px;font-size:10px;line-height:12px">-40&quot;</div><div style="left:266px;top:99px;width:1px;height:2px;background:#000"></div><div style="left:275px;top:99px;width:1px;height:2px;background:#000"></div><div style="left:284px;top:99px;width:1px;height:2px;background:#000"></div><div style="left:293px;top:99px;width:1px;height:2px;background:#000"></div><div style="left:301px;top:99px;width:1px;height:2px;background:#000"></div><div style="left:310px;top:99px;width:1px;height:2px;background:#000"></div><div style="left:319px;top:99px;width:1px;height:2px;background:#000"></div><div style="left:328px;top:99px;width:1px;height:2px;background:#000"></div><div style="left:337px;top:99px;width:1px;height:2px;background:#000"></div><div style="left:346px;top:91px;width:1px;height:10px;background:#000"></div><div class="t" style="left:348px;top:89px;font-size:10px;line-height:12px">-30&quot;</div><div style="left:355px;top:99px;width:1px;height:2px;background:#000"></div><div style="left:363px;top:99px;width:1px;height:2px;background:#000"></div><div style="left:372px;top:99px;width:1px;height:2px;background:#000"></div><div style="left:381px;top:99px;width:1px;height:2px;background:#000"></div><div style="left:390px;top:99px;width:1px;height:2px;background:#000"></div><div style="left:399px;top:99px;width:1px;height:2px;background:#000"></div><div style="left:408px;top:99px;width:1px;height:2px;background:#000"></div><div style="left:417px;top:99px;width:1px;height:2px;background:#000"></div><div style="left:425px;top:99px;width:1px;height:2px;background:#000"></div><div style="left:434px;top:91px;width:1px;height:10px;background:#000"></div><div class="t" style="left:436px;top:89px;font-size:10px;line-height:12px">-20&quot;</div><div style="left:443px;top:99px;width:1px;height:2px;background:#000"></div><div style="left:452px;top:99px;width:1px;height:2px;background:#000"></div><div style="left:461px;top:99px;width:1px;height:2px;background:#000"></div><div style="left:470px;top:99px;width:1px;height:2px;background:#000"></div><div style="left:479px;top:99px;width:1px;height:2px;background:#000"></div><div style="left:487px;top:99px;width:1px;height:2px;background:#000"></div><div style="left:496px;top:99px;width:1px;height:2px;background:#000"></div><div style="left:505px;top:99px;width:1px;height:2px;background:#000"></div><div style="left:514px;top:99px;width:1px;height:2px;background:#000"></div><div style="left:523px;top:91px;width:1px;height:10px;background:#000"></div><div class="t" style="left:525px;top:89px;font-size:10px;line-height:12px">-10&quot;</div><div style="left:532px;top:99px;width:1px;height:2px;background:#000"></div><div style="left:541px;top:99px;width:1px;height:2px;background:#000"></div><div style="left:549px;top:99px;width:1px;height:2px;background:#000"></div><div style="left:558px;top:99px;width:1px;height:2px;background:#000"></div><div style="left:567px;top:99px;width:1px;height:2px;background:#000"></div><div style="left:576px;top:99px;width:1px;height:2px;background:#000"></div><div style="left:585px;top:99px;width:1px;height:2px;background:#000"></div><div style="left:594px;top:99px;width:1px;height:2px;background:#000"></div><div style="left:603px;top:99px;width:1px;height:2px;background:#000"></div><div style="left:612px;top:91px;width:1px;height:10px;background:#000"></div><div class="t" style="left:614px;top:89px;font-size:10px;line-height:12px">0&quot;</div><div style="left:620px;top:99px;width:1px;height:2px;background:#000"></div><div style="left:629px;top:99px;width:1px;height:2px;background:#000"></div><div style="left:638px;top:99px;width:1px;height:2px;background:#000"></div><div style="left:647px;top:99px;width:1px;height:2px;background:#000"></div><div style="left:656px;top:99px;width:1px;height:2px;background:#000"></div><div style="left:665px;top:99px;width:1px;height:2px;background:#000"></div><div style="left:674px;top:99px;width:1px;height:2px;background:#000"></div><div style="left:682px;top:99px;width:1px;height:2px;background:#000"></div><div style="left:691px;top:99px;width:1px;height:2px;background:#000"></div><div style="left:700px;top:91px;width:1px;height:10px;background:#000"></div><div class="t" style="left:702px;top:89px;font-size:10px;line-height:12px">10&quot;</div><div style="left:709px;top:99px;width:1px;height:2px;background:#000"></div><div style="left:718px;top:99px;width:1px;height:2px;background:#000"></div><div style="left:727px;top:99px;width:1px;height:2px;background:#000"></div><div style="left:736px;top:99px;width:1px;height:2px;background:#000"></div><div style="left:744px;top:99px;width:1px;height:2px;background:#000"></div><div style="left:753px;top:99px;width:1px;height:2px;background:#000"></div><div style="left:762px;top:99px;width:1px;height:2px;background:#000"></div><div style="left:771px;top:99px;width:1px;height:2px;background:#000"></div><div style="left:780px;top:99px;width:1px;height:2px;background:#000"></div><div style="left:789px;top:91px;width:1px;height:10px;background:#000"></div><div class="t" style="left:791px;top:89px;font-size:10px;line-height:12px">20&quot;</div><div style="left:798px;top:99px;width:1px;height:2px;background:#000"></div><div style="left:806px;top:99px;width:1px;height:2px;background:#000"></div><div style="left:815px;top:99px;width:1px;height:2px;background:#000"></div><div style="left:824px;top:99px;width:1px;height:2px;background:#000"></div><div style="left:833px;top:99px;width:1px;height:2px;background:#000"></div><div style="left:842px;top:99px;width:1px;height:2px;background:#000"></div><div style="left:851px;top:99px;width:1px;height:2px;background:#000"></div><div style="left:860px;top:99px;width:1px;height:2px;background:#000"></div><div style="left:868px;top:99px;width:1px;height:2px;background:#000"></div><div style="left:877px;top:91px;width:1px;height:10px;background:#000"></div><div class="t" style="left:879px;top:89px;font-size:10px;line-height:12px">30&quot;</div><div style="left:886px;top:99px;width:1px;height:2px;background:#000"></div><div style="left:895px;top:99px;width:1px;height:2px;background:#000"></div><div style="left:904px;top:99px;width:1px;height:2px;background:#000"></div><div style="left:913px;top:99px;width:1px;height:2px;background:#000"></div><div style="left:922px;top:99px;width:1px;height:2px;background:#000"></div><div style="left:930px;top:99px;width:1px;height:2px;background:#000"></div><div style="left:939px;top:99px;width:1px;height:2px;background:#000"></div><div style="left:948px;top:99px;width:1px;height:2px;background:#000"></div><div style="left:957px;top:99px;width:1px;height:2px;background:#000"></div><div style="left:966px;top:91px;width:1px;height:10px;background:#000"></div><div class="t" style="left:968px;top:89px;font-size:10px;line-height:12px">40&quot;</div><div style="left:975px;top:99px;width:1px;height:2px;background:#000"></div><div style="left:984px;top:99px;width:1px;height:2px;background:#000"></div><div style="left:236px;top:682px;width:2px;height:1px;background:#000"></div><div style="left:228px;top:673px;width:10px;height:1px;background:#000"></div><div class="t" style="left:226.5px;top:671px;font-size:10px;line-height:12px;transform-origin:0 0;transform:rotate(-90deg)">-30&quot;</div><div style="left:236px;top:664px;width:2px;height:1px;background:#000"></div><div style="left:236px;top:655px;width:2px;height:1px;background:#000"></div><div style="left:236px;top:646px;width:2px;height:1px;background:#000"></div><div style="left:236px;top:637px;width:2px;height:1px;background:#000"></div><div style="left:236px;top:628px;width:2px;height:1px;background:#000"></div><div style="left:236px;top:620px;width:2px;height:1px;background:#000"></div><div style="left:236px;top:611px;width:2px;height:1px;background:#000"></div><div style="left:236px;top:602px;width:2px;height:1px;background:#000"></div><div style="left:236px;top:593px;width:2px;height:1px;background:#000"></div><div style="left:228px;top:584px;width:10px;height:1px;background:#000"></div><div class="t" style="left:226.5px;top:582px;font-size:10px;line-height:12px;transform-origin:0 0;transform:rotate(-90deg)">-20&quot;</div><div style="left:236px;top:575px;width:2px;height:1px;background:#000"></div><div style="left:236px;top:566px;width:2px;height:1px;background:#000"></div><div style="left:236px;top:558px;width:2px;height:1px;background:#000"></div><div style="left:236px;top:549px;width:2px;height:1px;background:#000"></div><div style="left:236px;top:540px;width:2px;height:1px;background:#000"></div><div style="left:236px;top:531px;width:2px;height:1px;background:#000"></div><div style="left:236px;top:522px;width:2px;height:1px;background:#000"></div><div style="left:236px;top:513px;width:2px;height:1px;background:#000"></div><div style="left:236px;top:504px;width:2px;height:1px;background:#000"></div><div style="left:228px;top:496px;width:10px;height:1px;background:#000"></div><div class="t" style="left:226.5px;top:494px;font-size:10px;line-height:12px;transform-origin:0 0;transform:rotate(-90deg)">-10&quot;</div><div style="left:236px;top:487px;width:2px;height:1px;background:#000"></div><div style="left:236px;top:478px;width:2px;height:1px;background:#000"></div><div style="left:236px;top:469px;width:2px;height:1px;background:#000"></div><div style="left:236px;top:460px;width:2px;height:1px;background:#000"></div><div style="left:236px;top:451px;width:2px;height:1px;background:#000"></div><div style="left:236px;top:442px;width:2px;height:1px;background:#000"></div><div style="left:236px;top:433px;width:2px;height:1px;background:#000"></div><div style="left:236px;top:425px;width:2px;height:1px;background:#000"></div><div style="left:236px;top:416px;width:2px;height:1px;background:#000"></div><div style="left:228px;top:407px;width:10px;height:1px;background:#000"></div><div class="t" style="left:226.5px;top:405px;font-size:10px;line-height:12px;transform-origin:0 0;transform:rotate(-90deg)">0&quot;</div><div style="left:236px;top:398px;width:2px;height:1px;background:#000"></div><div style="left:236px;top:389px;width:2px;height:1px;background:#000"></div><div style="left:236px;top:380px;width:2px;height:1px;background:#000"></div><div style="left:236px;top:371px;width:2px;height:1px;background:#000"></div><div style="left:236px;top:363px;width:2px;height:1px;background:#000"></div><div style="left:236px;top:354px;width:2px;height:1px;background:#000"></div><div style="left:236px;top:345px;width:2px;height:1px;background:#000"></div><div style="left:236px;top:336px;width:2px;height:1px;background:#000"></div><div style="left:236px;top:327px;width:2px;height:1px;background:#000"></div><div style="left:228px;top:318px;width:10px;height:1px;background:#000"></div><div class="t" style="left:226.5px;top:316px;font-size:10px;line-height:12px;transform-origin:0 0;transform:rotate(-90deg)">10&quot;</div><div style="left:236px;top:309px;width:2px;height:1px;background:#000"></div><div style="left:236px;top:301px;width:2px;height:1px;background:#000"></div><div style="left:236px;top:292px;width:2px;height:1px;background:#000"></div><div style="left:236px;top:283px;width:2px;height:1px;background:#000"></div><div style="left:236px;top:274px;width:2px;height:1px;background:#000"></div><div style="left:236px;top:265px;width:2px;height:1px;background:#000"></div><div style="left:236px;top:256px;width:2px;height:1px;background:#000"></div><div style="left:236px;top:247px;width:2px;height:1px;background:#000"></div><div style="left:236px;top:239px;width:2px;height:1px;background:#000"></div><div style="left:228px;top:230px;width:10px;height:1px;background:#000"></div><div class="t" style="left:226.5px;top:228px;font-size:10px;line-height:12px;transform-origin:0 0;transform:rotate(-90deg)">20&quot;</div><div style="left:236px;top:221px;width:2px;height:1px;background:#000"></div><div style="left:236px;top:212px;width:2px;height:1px;background:#000"></div><div style="left:236px;top:203px;width:2px;height:1px;background:#000"></div><div style="left:236px;top:194px;width:2px;height:1px;background:#000"></div><div style="left:236px;top:185px;width:2px;height:1px;background:#000"></div><div style="left:236px;top:177px;width:2px;height:1px;background:#000"></div><div style="left:236px;top:168px;width:2px;height:1px;background:#000"></div><div style="left:236px;top:159px;width:2px;height:1px;background:#000"></div><div style="left:236px;top:150px;width:2px;height:1px;background:#000"></div><div style="left:228px;top:141px;width:10px;height:1px;background:#000"></div><div class="t" style="left:226.5px;top:139px;font-size:10px;line-height:12px;transform-origin:0 0;transform:rotate(-90deg)">30&quot;</div><div style="left:236px;top:132px;width:2px;height:1px;background:#000"></div><div style="left:236px;top:123px;width:2px;height:1px;background:#000"></div><div style="left:236px;top:115px;width:2px;height:1px;background:#000"></div>
<div style="left:244px;top:107px;width:748px;height:583px;background:#fff;border-left:1px solid #716f64;border-top:1px solid #716f64;"></div>
<div style="left:245px;top:108px;width:746px;height:580px;background:#01374a;overflow:hidden;"><svg style="left:0;top:0" width="746" height="580" viewBox="245 108 746 580" shape-rendering="auto"><defs><linearGradient id="hg" x1="0" x2="1" y1="0" y2="0"><stop offset="0" stop-color="#c4c4c4"/><stop offset=".3" stop-color="#f2f2f2"/><stop offset=".65" stop-color="#dedede"/><stop offset="1" stop-color="#a4a4a4"/></linearGradient></defs><path d="M563.7 501 C561 508 561.5 515 563.7 520 C562 527 558 538 553 540.5 C550.5 540 548.5 538.5 546.9 536.5 C551 545 555.5 556 558.2 572 C559.5 582 558.5 592 555.5 600.3 C562 590 575 575 585.6 568.4 C592 565 598 562.5 602 561 L595.6 549.3 C585 542 572 531 563.7 520 Z" fill="#d0d0d0"/><path d="M563.7 501 C561 508 561.5 515 563.7 520 C572 531 585 542 596 549.5" fill="none" stroke="#f6f6f6" stroke-width="1.5"/><path d="M546.9 536.5 C556 552 572 557.5 582 556.5 C588 555.5 593 552.5 596 549.5 M555.5 600.3 C566 585 584 568 601 559.5" fill="none" stroke="#f6f6f6" stroke-width="1.3"/><path d="M547.6 538 C556.5 553.5 572 559 582 558 C588 557 593 554 596 551" fill="none" stroke="#8a8a8a" stroke-width=".5"/><path d="M659.4 478.2 C662.5 485 662 492 660 498.5 C661.5 505 663.5 509 665.8 511 C670 510 673.5 508 676.3 504.6 C672 512 669 519 667.6 526.5 C665 538 664.5 550 665.8 561.1 C666 565 666.5 569 667 572 C660 567 655 563 649.4 559.3 C642 555 635 552 627.5 550 L627.5 541 C640 527 652 512 660 498.5 Z" fill="#d0d0d0"/><path d="M659.4 478.2 C662.5 485 662 492 660 498.5 C652 512 640 527 627.5 541" fill="none" stroke="#f6f6f6" stroke-width="1.6"/><path d="M676.3 504.6 C672 518 664 530 655 536 C647 540.5 638 542.5 628.4 543 M667 572 C656 562 642 553 628 546" fill="none" stroke="#f6f6f6" stroke-width="1.3"/><path d="M675.6 508 C671 520 664 531.5 655 537.5 C647 542 638 544 629 544.5" fill="none" stroke="#8a8a8a" stroke-width=".5"/><path d="M611.4 131 L596.6 162.7 L596.6 492.8 L603.8 495 L625.9 487.3 L626.5 155.7 Z" fill="#c9c9c9"/><path d="M611.4 131 L596.6 162.7 L596.6 492.8 L603.8 495 L604.6 167.5 L613 146 Z" fill="#ececec"/><path d="M611.4 131 L596.6 162.7 L604.6 168 L613 146 Z" fill="#f4f4f4"/><path d="M611.4 131 L613 146 L623.6 165 L626.5 155.7 Z" fill="#a4a4a4"/><path d="M623.6 165 L626.5 155.7 L625.9 487.3 L623.6 488.2 Z" fill="#6e6e6e"/><path d="M603.8 495 L620.2 489.3 L618.4 501.9 L623.8 509.2 L616.5 519.2 L617.5 527 L624.2 534.7 L618.4 542 L622 547 L622 553 L619.3 557.5 L619.3 565 L602.9 565 L602.9 557.5 L600.1 553 L600.1 547 L603.8 542 L598.7 534.7 L605.4 527 L605.6 519.2 L598.7 509.2 L602.9 501.9 Z" fill="url(#hg)"/><path d="M600.1 551.5 L622 551.5 L622 553 L619.3 557 L602.9 557 L600.1 553 Z" fill="#bcbcbc"/><path d="M598.7 509.2 L611 507 L623.8 509.2 L611 511 Z M598.7 534.7 L611 532.5 L624.2 534.7 L611 536.5 Z" fill="#fafafa" opacity=".7"/><path d="M603 558.5 C598 556 595.5 548 598.3 538.3 C598.6 546 600.5 552 604.5 555.5 Z" fill="#f2f2f2"/><path d="M618.5 557 C624 554 627.5 544 625.3 532 C624.8 541 622.8 549 618 553 Z" fill="#f2f2f2"/><path d="M611 565 L619.3 565 L613.8 572.5 Z" fill="#c8c8c8"/><rect x="605.2" y="565" width="12.8" height="70" fill="url(#hg)"/><path d="M603.3 636 Q603.3 634 605.5 634 L616.8 634 Q619 634 619 636 L619 650 L611.3 659 L603.3 650 Z" fill="url(#hg)"/><path d="M603.3 650 L619 650 L611.3 659 Z" fill="#b4b4b4"/></svg></div>
<div style="left:993px;top:88px;width:30px;height:325px;border-right:1px solid #a4a3a8;border-bottom:1px solid #a4a3a8;"></div>
<div class="grip" style="left:994px;top:90px;width:27px;height:2px;"></div>
<div class="grip" style="left:994px;top:94px;width:27px;height:2px;"></div>
<div class="hatch" style="left:996px;top:98px;width:23px;height:22px;"></div>
<svg style="left:1004px;top:102px" width="9" height="15" viewBox="0 0 9 15" shape-rendering="crispEdges" ><path fill="#000" d="M0 0h1v1h-1zM0 1h2v1h-2zM0 2h1v1h-1zM2 2h1v1h-1zM0 3h1v1h-1zM3 3h1v1h-1zM0 4h1v1h-1zM4 4h1v1h-1zM0 5h1v1h-1zM5 5h1v1h-1zM0 6h1v1h-1zM6 6h1v1h-1zM0 7h1v1h-1zM7 7h1v1h-1zM0 8h1v1h-1zM5 8h4v1h-4zM0 9h1v1h-1zM3 9h1v1h-1zM6 9h1v1h-1zM0 10h1v1h-1zM2 10h1v1h-1zM4 10h1v1h-1zM7 10h1v1h-1zM0 11h2v1h-2zM4 11h1v1h-1zM7 11h1v1h-1zM0 12h1v1h-1zM5 12h1v1h-1zM8 12h1v1h-1zM5 13h1v1h-1zM8 13h1v1h-1zM6 14h2v1h-2z"/></svg>
<svg style="left:1000px;top:123px" width="9" height="15" viewBox="0 0 9 15" shape-rendering="crispEdges" ><path fill="#000" d="M0 0h1v1h-1zM0 1h2v1h-2zM0 2h1v1h-1zM2 2h1v1h-1zM0 3h1v1h-1zM3 3h1v1h-1zM0 4h1v1h-1zM4 4h1v1h-1zM0 5h1v1h-1zM5 5h1v1h-1zM0 6h1v1h-1zM6 6h1v1h-1zM0 7h1v1h-1zM7 7h1v1h-1zM0 8h1v1h-1zM5 8h4v1h-4zM0 9h1v1h-1zM3 9h1v1h-1zM6 9h1v1h-1zM0 10h1v1h-1zM2 10h1v1h-1zM4 10h1v1h-1zM7 10h1v1h-1zM0 11h2v1h-2zM4 11h1v1h-1zM7 11h1v1h-1zM0 12h1v1h-1zM5 12h1v1h-1zM8 12h1v1h-1zM5 13h1v1h-1zM8 13h1v1h-1zM6 14h2v1h-2z"/><path fill="#fff" d="M1 2h1v1h-1zM1 3h2v1h-2zM1 4h3v1h-3zM1 5h4v1h-4zM1 6h5v1h-5zM1 7h6v1h-6zM1 8h4v1h-4zM1 9h2v1h-2zM4 9h2v1h-2zM1 10h1v1h-1zM5 10h2v1h-2zM5 11h2v1h-2zM6 12h2v1h-2zM6 13h2v1h-2z"/></svg>
<svg style="left:1008px;top:123px" width="6" height="6" viewBox="0 0 6 6" shape-rendering="crispEdges" ><path fill="#000" d="M2 0h2v1h-2zM2 1h2v1h-2zM0 2h6v1h-6zM0 3h6v1h-6zM2 4h2v1h-2zM2 5h2v1h-2z"/></svg>
<svg style="left:993px;top:140px" width="30" height="270" viewBox="993 140 30 270" shape-rendering="crispEdges" fill="none"><rect x="1000.5" y="146.5" width="2" height="2" fill="none" stroke="#fff"/><rect x="999.5" y="145.5" width="2" height="2" fill="none" stroke="#9d9da1"/><path d="M1002 148 L1010 156" stroke="#9d9da1"/><rect x="1012.5" y="158.5" width="2" height="2" fill="none" stroke="#fff"/><rect x="1011.5" y="157.5" width="2" height="2" fill="#9d9da1" stroke="#9d9da1"/><path d="M1008.8 152.5 L1011.0 152.5 M1005.2 152.5 L1003.0 152.5 M1007.0 154.3 L1007.0 156.5 M1007.0 150.7 L1007.0 148.5 M1008.3 153.8 L1009.8 155.3 M1005.7 153.8 L1004.2 155.3 M1008.3 151.2 L1009.8 149.7 M1005.7 151.2 L1004.2 149.7 " stroke="#fff" transform="translate(1,1)"/><path d="M1008.8 152.5 L1011.0 152.5 M1005.2 152.5 L1003.0 152.5 M1007.0 154.3 L1007.0 156.5 M1007.0 150.7 L1007.0 148.5 M1008.3 153.8 L1009.8 155.3 M1005.7 153.8 L1004.2 155.3 M1008.3 151.2 L1009.8 149.7 M1005.7 151.2 L1004.2 149.7 " stroke="#9d9da1"/><rect x="1000.5" y="168.5" width="2" height="2" fill="none" stroke="#fff"/><rect x="999.5" y="167.5" width="2" height="2" fill="none" stroke="#9d9da1"/><rect x="1000.5" y="180.5" width="2" height="2" fill="none" stroke="#fff"/><rect x="999.5" y="179.5" width="2" height="2" fill="none" stroke="#9d9da1"/><path d="M1005.3 174.5 L1007.5 174.5 M1001.7 174.5 L999.5 174.5 M1003.5 176.3 L1003.5 178.5 M1003.5 172.7 L1003.5 170.5 M1004.8 175.8 L1006.3 177.3 M1002.2 175.8 L1000.7 177.3 M1004.8 173.2 L1006.3 171.7 M1002.2 173.2 L1000.7 171.7 " stroke="#fff" transform="translate(1,1)"/><path d="M1005.3 174.5 L1007.5 174.5 M1001.7 174.5 L999.5 174.5 M1003.5 176.3 L1003.5 178.5 M1003.5 172.7 L1003.5 170.5 M1004.8 175.8 L1006.3 177.3 M1002.2 175.8 L1000.7 177.3 M1004.8 173.2 L1006.3 171.7 M1002.2 173.2 L1000.7 171.7 " stroke="#9d9da1"/><path d="M1013.3 174.5 L1015.5 174.5 M1009.7 174.5 L1007.5 174.5 M1011.5 176.3 L1011.5 178.5 M1011.5 172.7 L1011.5 170.5 M1012.8 175.8 L1014.3 177.3 M1010.2 175.8 L1008.7 177.3 M1012.8 173.2 L1014.3 171.7 M1010.2 173.2 L1008.7 171.7 " stroke="#fff" transform="translate(1,1)"/><path d="M1013.3 174.5 L1015.5 174.5 M1009.7 174.5 L1007.5 174.5 M1011.5 176.3 L1011.5 178.5 M1011.5 172.7 L1011.5 170.5 M1012.8 175.8 L1014.3 177.3 M1010.2 175.8 L1008.7 177.3 M1012.8 173.2 L1014.3 171.7 M1010.2 173.2 L1008.7 171.7 " stroke="#9d9da1"/><rect x="1002.5" y="173.5" width="2" height="2" fill="#e0dfe3" stroke="#9d9da1"/><rect x="1010" y="173" width="3" height="3" fill="#9d9da1"/><rect x="1007.5" y="190.5" width="2" height="2" fill="none" stroke="#fff"/><rect x="1006.5" y="189.5" width="2" height="2" fill="none" stroke="#9d9da1"/><rect x="1001.5" y="202.5" width="2" height="2" fill="none" stroke="#fff"/><rect x="1000.5" y="201.5" width="2" height="2" fill="none" stroke="#9d9da1"/><rect x="1013.5" y="202.5" width="2" height="2" fill="none" stroke="#fff"/><rect x="1012.5" y="201.5" width="2" height="2" fill="none" stroke="#9d9da1"/><rect x="1007.5" y="212.5" width="2" height="2" fill="none" stroke="#fff"/><rect x="1006.5" y="211.5" width="2" height="2" fill="none" stroke="#9d9da1"/><rect x="1001.5" y="224.5" width="2" height="2" fill="none" stroke="#fff"/><rect x="1000.5" y="223.5" width="2" height="2" fill="none" stroke="#9d9da1"/><rect x="1013.5" y="224.5" width="2" height="2" fill="none" stroke="#fff"/><rect x="1012.5" y="223.5" width="2" height="2" fill="none" stroke="#9d9da1"/><rect x="1001.5" y="344.5" width="2" height="2" fill="none" stroke="#fff"/><rect x="1000.5" y="343.5" width="2" height="2" fill="none" stroke="#9d9da1"/><rect x="1007.5" y="344.5" width="2" height="2" fill="none" stroke="#fff"/><rect x="1006.5" y="343.5" width="2" height="2" fill="none" stroke="#9d9da1"/><rect x="1013.5" y="344.5" width="2" height="2" fill="none" stroke="#fff"/><rect x="1012.5" y="343.5" width="2" height="2" fill="none" stroke="#9d9da1"/><rect x="1001.5" y="356.5" width="2" height="2" fill="none" stroke="#fff"/><rect x="1000.5" y="355.5" width="2" height="2" fill="none" stroke="#9d9da1"/><rect x="1007.5" y="356.5" width="2" height="2" fill="none" stroke="#fff"/><rect x="1006.5" y="355.5" width="2" height="2" fill="none" stroke="#9d9da1"/><rect x="1013.5" y="356.5" width="2" height="2" fill="none" stroke="#fff"/><rect x="1012.5" y="355.5" width="2" height="2" fill="none" stroke="#9d9da1"/><rect x="1007.5" y="389.5" width="2" height="2" fill="none" stroke="#fff"/><rect x="1006.5" y="388.5" width="2" height="2" fill="none" stroke="#9d9da1"/><rect x="1001.5" y="393.5" width="2" height="2" fill="none" stroke="#fff"/><rect x="1000.5" y="392.5" width="2" height="2" fill="none" stroke="#9d9da1"/><rect x="1013.5" y="393.5" width="2" height="2" fill="none" stroke="#fff"/><rect x="1012.5" y="392.5" width="2" height="2" fill="none" stroke="#9d9da1"/><rect x="1002.5" y="400.5" width="2" height="2" fill="none" stroke="#fff"/><rect x="1001.5" y="399.5" width="2" height="2" fill="none" stroke="#9d9da1"/><rect x="1012.5" y="400.5" width="2" height="2" fill="none" stroke="#fff"/><rect x="1011.5" y="399.5" width="2" height="2" fill="none" stroke="#9d9da1"/></svg>
<svg style="left:999px;top:233px" width="16" height="14" viewBox="0 0 16 14" shape-rendering="crispEdges" ><path fill="#000" d="M5 0h4v1h-4zM4 1h1v1h-1zM9 1h2v1h-2zM3 2h1v1h-1zM11 2h1v1h-1zM2 3h1v1h-1zM11 3h1v1h-1zM2 4h1v1h-1zM10 4h1v1h-1zM1 5h1v1h-1zM9 5h1v1h-1zM0 6h1v1h-1zM8 6h1v1h-1zM0 7h1v1h-1zM9 7h2v1h-2zM0 8h1v1h-1zM11 8h2v1h-2zM0 9h1v1h-1zM12 9h1v1h-1zM1 10h1v1h-1zM11 10h1v1h-1zM1 11h1v1h-1zM10 11h1v1h-1zM2 12h2v1h-2zM5 12h3v1h-3zM9 12h1v1h-1zM4 13h1v1h-1zM8 13h1v1h-1z"/></svg>
<svg style="left:1001px;top:255px" width="12" height="13" viewBox="0 0 12 13" shape-rendering="crispEdges" ><path fill="#000" d="M4 0h7v1h-7zM3 1h2v1h-2zM10 1h1v1h-1zM2 2h1v1h-1zM10 2h1v1h-1zM1 3h1v1h-1zM9 3h1v1h-1zM0 4h1v1h-1zM9 4h1v1h-1zM0 5h1v1h-1zM8 5h1v1h-1zM0 6h1v1h-1zM8 6h4v1h-4zM0 7h1v1h-1zM11 7h1v1h-1zM0 8h1v1h-1zM11 8h1v1h-1zM0 9h1v1h-1zM11 9h1v1h-1zM0 10h1v1h-1zM11 10h1v1h-1zM0 11h1v1h-1zM11 11h1v1h-1zM0 12h12v1h-12z"/></svg>
<svg style="left:998px;top:276px" width="18" height="17" viewBox="0 0 18 17" shape-rendering="auto"><path d="M6.5 1 L2 6.5 L5 12 L8 9 L8 6 L11 6.5 L12 5 Z" fill="#f0f" stroke="#000" stroke-width=".8" stroke-dasharray="1 1"/><path d="M1 5 L3 7 M1 7 L3 5 M14 2 L11.5 5 M14 8 L11.5 5.5" stroke="#000" stroke-width="1"/><path d="M8 6 L8 14.5 L10 12.5 L11.3 15 L12.6 14.4 L11.4 12 L14.5 12 Z" fill="#fff" stroke="#000" stroke-width=".9"/></svg>
<svg style="left:999px;top:298px" width="18" height="18" viewBox="0 0 18 18" shape-rendering="auto"><circle cx="9" cy="9" r="7.5" fill="#fff"/><circle cx="8" cy="8" r="7.5" fill="#9d9da1"/><path d="M4.5 8 Q4 5.5 6 4.5 L10 4.5 M11.5 8 Q12 10.5 10 11.5 L6 11.5 M5.5 13 L10.5 13" fill="none" stroke="#fff" stroke-width="1.1"/></svg>
<svg style="left:1002px;top:322px" width="12" height="13" viewBox="0 0 12 13" shape-rendering="crispEdges" ><path fill="#9d9da1" d="M3 0h4v1h-4zM2 1h1v1h-1zM7 1h1v1h-1zM1 2h1v1h-1zM8 2h1v1h-1zM1 3h1v1h-1zM8 3h1v1h-1zM8 4h1v1h-1zM0 5h10v1h-10zM0 7h10v1h-10zM0 9h10v1h-10zM0 11h10v1h-10z"/><path fill="#fff" d="M4 1h3v1h-3zM3 2h1v1h-1zM2 3h1v1h-1zM9 3h1v1h-1zM2 4h1v1h-1zM9 4h1v1h-1zM1 6h10v1h-10zM1 8h10v1h-10zM1 10h10v1h-10zM1 12h10v1h-10z"/></svg>
<svg style="left:999px;top:364px" width="18" height="18" viewBox="0 0 18 18" shape-rendering="auto"><g transform="translate(1,1)" stroke="#fff" fill="none"><path d="M3 1.5 L13 1.5 L8 6 Z M3 1.5 L8 6 L1.5 9 Z M13 1.5 L14.5 9 L8 6 M1.5 9 L3 13 L8 15 L13 13 L14.5 9 Z M1.5 9 L14.5 9 M5 9 L5.5 14 M11 9 L10.5 14 M8 6 L5 9 M8 6 L11 9 M3 12.5 L13 12.5"/></g><g stroke="#9d9da1" fill="none"><path d="M3 1.5 L13 1.5 L8 6 Z M3 1.5 L8 6 L1.5 9 Z M13 1.5 L14.5 9 L8 6 M1.5 9 L3 13 L8 15 L13 13 L14.5 9 Z M1.5 9 L14.5 9 M5 9 L5.5 14 M11 9 L10.5 14 M8 6 L5 9 M8 6 L11 9 M3 12.5 L13 12.5"/></g></svg>
<div style="left:993px;top:688px;width:31px;height:1px;background:#a4a3a8;"></div>
<div style="left:0px;top:688px;width:222px;height:2px;background:#fff;height:1px;"></div>
<div class="grip" style="left:3px;top:691px;width:2px;height:25px;"></div>
<div class="grip" style="left:7px;top:691px;width:2px;height:25px;"></div>
<div class="hatch" style="left:11px;top:693px;width:23px;height:22px;"></div>
<div class="hatch" style="left:34px;top:693px;width:23px;height:22px;"></div>
<div class="hatch" style="left:57px;top:693px;width:23px;height:22px;"></div>
<div class="hatch" style="left:80px;top:693px;width:23px;height:22px;"></div>
<div class="hatch" style="left:149px;top:693px;width:23px;height:22px;"></div>
<div class="hatch" style="left:172px;top:693px;width:23px;height:22px;"></div>
<div class="hatch" style="left:249px;top:693px;width:23px;height:22px;"></div>
<div class="hatch" style="left:619px;top:693px;width:23px;height:22px;"></div>
<div style="left:199px;top:693px;width:1px;height:22px;background:#a4a3a8;"></div>
<div style="left:200px;top:693px;width:1px;height:22px;background:#fff;"></div>
<div style="left:276px;top:693px;width:1px;height:22px;background:#a4a3a8;"></div>
<div style="left:277px;top:693px;width:1px;height:22px;background:#fff;"></div>
<div style="left:330px;top:693px;width:1px;height:22px;background:#a4a3a8;"></div>
<div style="left:331px;top:693px;width:1px;height:22px;background:#fff;"></div>
<div style="left:460px;top:693px;width:1px;height:22px;background:#a4a3a8;"></div>
<div style="left:461px;top:693px;width:1px;height:22px;background:#fff;"></div>
<div style="left:514px;top:693px;width:1px;height:22px;background:#a4a3a8;"></div>
<div style="left:515px;top:693px;width:1px;height:22px;background:#fff;"></div>
<div style="left:592px;top:693px;width:1px;height:22px;background:#a4a3a8;"></div>
<div style="left:593px;top:693px;width:1px;height:22px;background:#fff;"></div>
<div style="left:646px;top:693px;width:1px;height:22px;background:#a4a3a8;"></div>
<div style="left:647px;top:693px;width:1px;height:22px;background:#fff;"></div>
<div style="left:702px;top:690px;width:1px;height:28px;background:#a4a3a8;"></div>
<div style="left:703px;top:690px;width:1px;height:28px;background:#fff;"></div>
<div style="left:334px;top:696px;width:122px;height:17px;background:linear-gradient(to bottom,#e4e5ef 0%,#f2f2f8 40%,#fdfdfe 100%);"></div>
<div style="left:334px;top:697px;width:17px;height:15px;background:linear-gradient(to bottom,#efeee8,#e5e4dc);border:1px solid #fbfbf2;border-radius:3px;box-shadow:0 0 0 1px rgba(214,212,196,.55);"><svg style="left:1px;top:0px" width="12" height="13" viewBox="0 0 12 13" shape-rendering="auto"><path d="M7 3 L3.5 6.5 L7 10" fill="none" stroke="#c2c2ba" stroke-width="2"/></svg></div>
<div style="left:439px;top:697px;width:17px;height:15px;background:linear-gradient(to bottom,#efeee8,#e5e4dc);border:1px solid #fbfbf2;border-radius:3px;box-shadow:0 0 0 1px rgba(214,212,196,.55);"><svg style="left:1px;top:0px" width="12" height="13" viewBox="0 0 12 13" shape-rendering="auto"><path d="M4.5 3 L8 6.5 L4.5 10" fill="none" stroke="#c2c2ba" stroke-width="2"/></svg></div>
<div style="left:518px;top:693px;width:70px;height:22px;border:1px solid #000;box-shadow:inset 1px 1px 0 #000;background:#e0dfe3;"></div>
<svg style="left:15px;top:696px" width="18" height="18" viewBox="0 0 18 18" shape-rendering="auto"><g transform="translate(1,1)" fill="#fff" stroke="none"><path d="M8 0.5 Q12.5 4 12.5 8 Q12.5 12 8 15.5 Q3.5 12 3.5 8 Q3.5 4 8 0.5Z M0 8 L3.5 4.5 L3.5 11.5 Z M16 8 L12.5 4.5 L12.5 11.5 Z"/></g><g fill="#9d9da1" stroke="none"><path d="M8 0.5 Q12.5 4 12.5 8 Q12.5 12 8 15.5 Q3.5 12 3.5 8 Q3.5 4 8 0.5Z M0 8 L3.5 4.5 L3.5 11.5 Z M16 8 L12.5 4.5 L12.5 11.5 Z"/></g></svg>
<svg style="left:37px;top:696px" width="18" height="18" viewBox="0 0 18 18" shape-rendering="auto"><g transform="translate(1,1)" fill="#fff" stroke="none"><path d="M8 2.5 L12 5 L12 11 L8 13.5 L4 11 L4 5 Z M1 1 L4.5 1 L3.5 2 L5 3.5 L3.5 5 L2 3.5 L1 4.5 Z M15.5 1 L12 1 L13 2 L11.5 3.5 L13 5 L14.5 3.5 L15.5 4.5 Z M1 15.5 L4.5 15.5 L3.5 14.5 L5 13 L3.5 11.5 L2 13 L1 12 Z M15.5 15.5 L12 15.5 L13 14.5 L11.5 13 L13 11.5 L14.5 13 L15.5 12 Z"/></g><g fill="#9d9da1" stroke="none"><path d="M8 2.5 L12 5 L12 11 L8 13.5 L4 11 L4 5 Z M1 1 L4.5 1 L3.5 2 L5 3.5 L3.5 5 L2 3.5 L1 4.5 Z M15.5 1 L12 1 L13 2 L11.5 3.5 L13 5 L14.5 3.5 L15.5 4.5 Z M1 15.5 L4.5 15.5 L3.5 14.5 L5 13 L3.5 11.5 L2 13 L1 12 Z M15.5 15.5 L12 15.5 L13 14.5 L11.5 13 L13 11.5 L14.5 13 L15.5 12 Z"/></g></svg>
<svg style="left:61px;top:696px" width="18" height="17" viewBox="0 0 18 17" shape-rendering="auto"><g transform="translate(1,1)" fill="#fff" stroke="none"><path d="M5 3 Q7 0.5 10 1 L12 3 L14 3 L14 1.5 L16 1.5 L16 7 L13 7 L12 10 L11 13 Q9 15.5 6 15 L7 13 L5 13 L4 14 L0.5 14 L0.5 9 L3 9 L4 6 Z"/><path d="M5 3 Q8 1.5 10 2.5 M7 14 Q9 14 10.5 12.5" stroke="#fff" stroke-width="1" fill="none"/></g><g fill="#9d9da1" stroke="none"><path d="M5 3 Q7 0.5 10 1 L12 3 L14 3 L14 1.5 L16 1.5 L16 7 L13 7 L12 10 L11 13 Q9 15.5 6 15 L7 13 L5 13 L4 14 L0.5 14 L0.5 9 L3 9 L4 6 Z"/><path d="M5 3 Q8 1.5 10 2.5 M7 14 Q9 14 10.5 12.5" stroke="#fff" stroke-width="1" fill="none"/></g></svg>
<svg style="left:84px;top:696px" width="18" height="17" viewBox="0 0 18 17" shape-rendering="auto"><g fill="none" stroke-width="1.8"><g transform="translate(1,1)" stroke="#fff"><path d="M3 1.5 L6.5 1.5 L8.5 3.5 L8.5 6 L6.5 8 L3 8 L1 6 L1 3.5 Z M9.5 8 L13 8 L15 10 L15 12.5 L13 14.5 L9.5 14.5 L7.5 12.5 L7.5 10 Z"/></g><g stroke="#9d9da1"><path d="M3 1.5 L6.5 1.5 L8.5 3.5 L8.5 6 L6.5 8 L3 8 L1 6 L1 3.5 Z M9.5 8 L13 8 L15 10 L15 12.5 L13 14.5 L9.5 14.5 L7.5 12.5 L7.5 10 Z M9 3 L11 3 L12 5 L12 8"/></g></g></svg>
<svg style="left:106px;top:696px" width="17" height="16" viewBox="0 0 17 16" shape-rendering="crispEdges" ><path fill="#9d9da1" d="M2 0h2v1h-2zM11 0h5v1h-5zM1 1h4v1h-4zM11 1h5v1h-5zM0 2h6v1h-6zM12 2h4v1h-4zM0 3h6v1h-6zM13 3h3v1h-3zM0 4h5v1h-5zM14 4h2v1h-2zM1 5h3v1h-3zM13 5h3v1h-3zM0 6h5v1h-5zM7 6h9v1h-9zM0 7h6v1h-6zM7 7h9v1h-9zM0 8h16v1h-16zM0 9h16v1h-16zM0 10h16v1h-16zM1 11h15v1h-15zM2 12h14v1h-14zM12 13h4v1h-4zM13 14h3v1h-3z"/><path fill="#fff" d="M16 1h1v1h-1zM16 2h1v1h-1zM6 3h1v1h-1zM16 3h1v1h-1zM5 4h2v1h-2zM16 4h1v1h-1zM4 5h2v1h-2zM16 5h1v1h-1zM16 6h1v1h-1zM16 7h1v1h-1zM16 8h1v1h-1zM16 9h1v1h-1zM16 10h1v1h-1zM16 11h1v1h-1zM16 12h1v1h-1zM3 13h9v1h-9zM16 13h1v1h-1zM16 14h1v1h-1zM14 15h3v1h-3z"/></svg>
<svg style="left:129px;top:696px" width="15" height="15" viewBox="0 0 15 15" shape-rendering="auto"><g transform="translate(1,1)" fill="#fff" stroke="none"><path d="M9.5 0.5 L12.5 0.5 L13.5 1.5 L13.5 3.5 L12.5 4.5 L10.5 4.5 L9 6 L9 7 L7 7 L5 9 L4.5 10 L4.5 12 L3.5 13 L1 13 L0 12 L0 10 L1 9 L3 9 L4.5 7.5 L5 6 L7 6 L8.5 4 L8.5 1.5 Z"/></g><g fill="#9d9da1" stroke="none"><path d="M9.5 0.5 L12.5 0.5 L13.5 1.5 L13.5 3.5 L12.5 4.5 L10.5 4.5 L9 6 L9 7 L7 7 L5 9 L4.5 10 L4.5 12 L3.5 13 L1 13 L0 12 L0 10 L1 9 L3 9 L4.5 7.5 L5 6 L7 6 L8.5 4 L8.5 1.5 Z"/></g></svg>
<svg style="left:153px;top:698px" width="17" height="13" viewBox="0 0 17 13" shape-rendering="auto"><g stroke-width="1.3" fill="none"><g transform="translate(1,1)" stroke="#fff"><path d="M0 6.5 L5.5 6.5 M10.5 6.5 L16 6.5 M9 1 L9 10 L7.5 11.5 L6.5 10"/></g><g stroke="#9d9da1"><path d="M0 6.5 L5.5 6.5 M10.5 6.5 L16 6.5 M9 1 L9 10 L7.5 11.5 L6.5 10"/></g></g><rect x="8" y="1" width="2" height="9" fill="#9d9da1"/></svg>
<div class="t" style="left:177px;top:700px;font-weight:bold;font-size:9px;line-height:11px;color:#fff;transform-origin:0 0;transform:scaleX(0.8043);">ETC.</div>
<div class="t" style="left:176px;top:699px;font-weight:bold;font-size:9px;line-height:11px;color:#9d9da1;transform-origin:0 0;transform:scaleX(0.8043);">ETC.</div>
<svg style="left:209px;top:696px" width="11" height="16" viewBox="0 0 11 16" shape-rendering="auto"><g fill="none"><g transform="translate(1,1)" stroke="#fff"><path d="M4.5 0.5 L8.5 0.5 L8.5 10.5 L4.5 10.5 Z M4.5 5.5 L8.5 5.5 M0.5 10.5 L8.5 10.5 L8.5 14 L0.5 14 Z"/></g><g stroke="#9d9da1"><path d="M4.5 0.5 L8.5 0.5 L8.5 10.5 L4.5 10.5 Z M4.5 5.5 L8.5 5.5 M0.5 10.5 L8.5 10.5 L8.5 14 L0.5 14 Z"/></g></g></svg>
<svg style="left:232px;top:696px" width="11" height="16" viewBox="0 0 11 16" shape-rendering="auto"><g fill="none"><g transform="translate(1,1)" stroke="#fff"><path d="M4.5 0.5 L8.5 0.5 L8.5 10.5 L4.5 10.5 Z M4.5 5.5 L8.5 5.5 M0.5 10.5 L8.5 10.5 L8.5 14 L0.5 14 Z"/></g><g stroke="#9d9da1"><path d="M4.5 0.5 L8.5 0.5 L8.5 10.5 L4.5 10.5 Z M4.5 5.5 L8.5 5.5 M0.5 10.5 L8.5 10.5 L8.5 14 L0.5 14 Z"/></g></g></svg>
<svg style="left:253px;top:697px" width="17" height="16" viewBox="0 0 17 16" shape-rendering="auto"><g fill="#e0dfe3" stroke="#9d9da1"><circle cx="8" cy="2.5" r="2"/><rect x="6.5" y="5.5" width="3" height="4"/><rect x="0.5" y="5.5" width="5" height="2"/><rect x="10.5" y="5.5" width="5" height="2"/><rect x="6" y="10" width="1.5" height="3"/><rect x="9" y="10" width="1.5" height="3"/><rect x="4.5" y="13" width="3" height="1.5"/><rect x="9" y="13" width="3" height="1.5"/></g></svg>
<svg style="left:283px;top:696px" width="18" height="13" viewBox="0 0 18 13" shape-rendering="auto"><g transform="translate(1,1)" fill="#fff" stroke="none"><path d="M2 3 L6 3 L8 5 L8 6 L16 6 L16 10 L14 10 L14 8 L12 8 L12 10 L10.5 10 L10.5 8 L8 8 L6 10.5 L2 10.5 L0.5 9 L0.5 4.5 Z"/><path d="M3 6 L5 6 L5 8 L3 8Z" fill="#e0dfe3"/><path d="M2 0 L3 1.5 M4 0 L4 1.5 M6 0 L5 1.5 M0.5 1.5 L1.8 2.3" stroke="#9d9da1" stroke-width=".8"/></g><g fill="#9d9da1" stroke="none"><path d="M2 3 L6 3 L8 5 L8 6 L16 6 L16 10 L14 10 L14 8 L12 8 L12 10 L10.5 10 L10.5 8 L8 8 L6 10.5 L2 10.5 L0.5 9 L0.5 4.5 Z"/><path d="M3 6 L5 6 L5 8 L3 8Z" fill="#e0dfe3"/><path d="M2 0 L3 1.5 M4 0 L4 1.5 M6 0 L5 1.5 M0.5 1.5 L1.8 2.3" stroke="#9d9da1" stroke-width=".8"/></g></svg>
<svg style="left:305px;top:695px" width="19" height="18" viewBox="0 0 19 18" shape-rendering="auto"><g fill="none" stroke-width="3.2"><g transform="translate(1,1)" stroke="#fff"><path d="M2 2 L8 8 L14 2 M2 14 L8 8 L13 14 M2 2 L2 14 M8 8 L15 7 L15 11"/></g><g stroke="#9d9da1"><path d="M2 2 L8 8 L14 2 M2 14 L8 8 L13 14 M2 2 L2 14 M8 8 L15 7 L15 11"/></g></g><circle cx="5" cy="7" r="1.5" fill="#e0dfe3"/></svg>
<svg style="left:470px;top:699px" width="12" height="10" viewBox="0 0 12 10" shape-rendering="auto"><g transform="translate(1,1)" fill="#fff" stroke="none"><path d="M5.5 0 L5.5 8 L1.5 4 Z M9.5 0 L9.5 8 L5.5 4 Z"/><rect x="0" y="0" width="1.5" height="8"/></g><g fill="#9d9da1" stroke="none"><path d="M5.5 0 L5.5 8 L1.5 4 Z M9.5 0 L9.5 8 L5.5 4 Z"/><rect x="0" y="0" width="1.5" height="8"/></g></svg>
<svg style="left:495px;top:699px" width="12" height="10" viewBox="0 0 12 10" shape-rendering="auto"><g transform="translate(1,1)" fill="#fff" stroke="none"><path d="M5.5 0 L5.5 8 L1.5 4 Z"/><rect x="0" y="0" width="1.5" height="8"/></g><g fill="#9d9da1" stroke="none"><path d="M5.5 0 L5.5 8 L1.5 4 Z"/><rect x="0" y="0" width="1.5" height="8"/></g></svg>
<svg style="left:605px;top:699px" width="12" height="10" viewBox="0 0 12 10" shape-rendering="auto"><g transform="translate(1,1)" fill="#fff" stroke="none"><path d="M0 0 L4 4 L0 8 Z"/></g><g fill="#9d9da1" stroke="none"><path d="M0 0 L4 4 L0 8 Z"/></g></svg>
<svg style="left:658px;top:699px" width="12" height="10" viewBox="0 0 12 10" shape-rendering="auto"><g transform="translate(1,1)" fill="#fff" stroke="none"><path d="M0 0 L4 4 L0 8 Z"/><rect x="4" y="0" width="1.5" height="8"/></g><g fill="#9d9da1" stroke="none"><path d="M0 0 L4 4 L0 8 Z"/><rect x="4" y="0" width="1.5" height="8"/></g></svg>
<svg style="left:679px;top:699px" width="12" height="10" viewBox="0 0 12 10" shape-rendering="auto"><g transform="translate(1,1)" fill="#fff" stroke="none"><path d="M0 0 L4 4 L0 8 Z M4 0 L8 4 L4 8 Z"/><rect x="8" y="0" width="1.5" height="8"/></g><g fill="#9d9da1" stroke="none"><path d="M0 0 L4 4 L0 8 Z M4 0 L8 4 L4 8 Z"/><rect x="8" y="0" width="1.5" height="8"/></g></svg>
<svg style="left:623px;top:701px" width="14" height="8" viewBox="0 0 14 8" shape-rendering="crispEdges" ><path fill="#000" d="M4 0h9v1h-9zM2 1h2v1h-2zM12 1h2v1h-2zM1 2h3v1h-3zM13 2h1v1h-1zM0 3h7v1h-7zM13 3h1v1h-1zM1 4h3v1h-3zM13 4h1v1h-1zM2 5h2v1h-2zM12 5h2v1h-2zM4 6h9v1h-9zM4 7h9v1h-9z"/></svg>
<div style="left:0px;top:718px;width:1024px;height:1px;background:#a4a3a8;"></div>
<div style="left:0px;top:719px;width:1024px;height:1px;background:#fff;"></div>
<div style="left:0px;top:720px;width:1024px;height:18px;background:linear-gradient(to bottom,#acacb0 0px,#acacb0 1px,#dcdce0 1px,#e2e2e6 3px,#dedee2 12px,#cfcfd4 17px,#c8c8d0 18px);"></div>
<div class="t st" style="left:1.4px;top:723px;letter-spacing:-0.077px;">Render Time:&nbsp; 0:00:00.32</div>
<div style="left:727px;top:722px;width:1px;height:14px;background:#d4d0c0;"></div>
<div style="left:728px;top:722px;width:1px;height:14px;background:#fff;"></div>
<div style="left:783px;top:722px;width:1px;height:14px;background:#d4d0c0;"></div>
<div style="left:784px;top:722px;width:1px;height:14px;background:#fff;"></div>
<div style="left:847px;top:722px;width:1px;height:14px;background:#d4d0c0;"></div>
<div style="left:848px;top:722px;width:1px;height:14px;background:#fff;"></div>
<div style="left:903px;top:722px;width:1px;height:14px;background:#d4d0c0;"></div>
<div style="left:904px;top:722px;width:1px;height:14px;background:#fff;"></div>
<div style="left:959px;top:722px;width:1px;height:14px;background:#d4d0c0;"></div>
<div style="left:960px;top:722px;width:1px;height:14px;background:#fff;"></div>
<div style="left:1021px;top:722px;width:1px;height:14px;background:#d4d0c0;"></div>
<div style="left:1022px;top:722px;width:1px;height:14px;background:#fff;"></div>
<svg style="left:678px;top:726px" width="11" height="5" viewBox="0 0 11 5" shape-rendering="crispEdges" ><path fill="#000" d="M2 0h1v1h-1zM8 0h1v1h-1zM1 1h2v1h-2zM8 1h2v1h-2zM0 2h11v1h-11zM1 3h2v1h-2zM8 3h2v1h-2zM2 4h1v1h-1zM8 4h1v1h-1z"/></svg>
<svg style="left:736px;top:724px" width="5" height="10" viewBox="0 0 5 10" shape-rendering="crispEdges" ><path fill="#000" d="M2 0h1v1h-1zM1 1h3v1h-3zM0 2h5v1h-5zM2 3h1v1h-1zM2 4h1v1h-1zM2 5h1v1h-1zM2 6h1v1h-1zM0 7h5v1h-5zM1 8h3v1h-3zM2 9h1v1h-1z"/></svg>
<svg style="left:796px;top:723px" width="14" height="13" viewBox="0 0 14 13" shape-rendering="auto"><circle cx="7" cy="6.5" r="5" fill="none" stroke="#000" stroke-width="1.1"/><path d="M0 6.5 L14 6.5" stroke="#000" stroke-width="1.2"/><path d="M3.5 0.5 L6.5 0.8 L4.2 3.2 Z M10.5 12.5 L7.5 12.2 L9.8 9.8 Z" fill="#000"/></svg>
<svg style="left:853px;top:723px" width="13" height="14" viewBox="0 0 13 14" shape-rendering="auto"><circle cx="6.5" cy="7" r="5" fill="none" stroke="#000" stroke-width="1.1"/><path d="M6.5 0 L6.5 14" stroke="#000" stroke-width="1.2"/><path d="M0.6 3.5 L0.8 6.6 L3.2 4.2 Z M12.4 10.5 L12.2 7.4 L9.8 9.8 Z" fill="#000"/></svg>
<svg style="left:908px;top:723px" width="14" height="14" viewBox="0 0 14 14" shape-rendering="auto"><circle cx="6.5" cy="7.5" r="5" fill="none" stroke="#000" stroke-width="1.1"/><path d="M0.5 13.5 L13 1" stroke="#000" stroke-width="1.2"/><path d="M0.4 5 L0.6 8.2 L3 5.8 Z M12.8 10 L12.6 6.8 L10.2 9.2 Z" fill="#000"/></svg>
<svg style="left:974px;top:724px" width="10" height="9" viewBox="0 0 10 9" shape-rendering="crispEdges" ><path fill="#000" d="M0 0h3v1h-3zM6 0h3v1h-3zM0 1h2v1h-2zM7 1h2v1h-2zM0 2h1v1h-1zM2 2h1v1h-1zM6 2h1v1h-1zM8 2h1v1h-1zM3 3h1v1h-1zM5 3h1v1h-1zM4 4h1v1h-1zM3 5h1v1h-1zM5 5h1v1h-1zM0 6h1v1h-1zM2 6h1v1h-1zM6 6h1v1h-1zM8 6h1v1h-1zM0 7h2v1h-2zM7 7h2v1h-2zM0 8h3v1h-3zM6 8h3v1h-3z"/></svg>
<div class="t st" style="left:692.5px;top:723px;transform-origin:0 0;transform:scaleX(0.9201);">-2</div>
<div class="t st" style="left:748px;top:723px;transform-origin:0 0;transform:scaleX(0.9712);">-3</div>
<div class="t st" style="left:812.5px;top:723px;transform-origin:0 0;transform:scaleX(0.9633);">22</div>
<div class="t st" style="left:868.7px;top:723px;transform-origin:0 0;transform:scaleX(0.9633);">33</div>
<div class="t st" style="left:925px;top:723px;transform-origin:0 0;transform:scaleX(0.9143);">0</div>
<div class="t st" style="left:989.2px;top:723px;transform-origin:0 0;transform:scaleX(0.9260);">349</div>
<div style="left:0px;top:738px;width:1024px;height:30px;background:linear-gradient(to bottom,#8888a8 0px,#8888a8 1px,#ffffff 1px,#ffffff 4px,#9a96b2 5px,#a4a4bc 9px,#b8bcd0 15px,#c8cccc 17px,#d6d6d6 20px,#ececec 27px,#e8f0e8 28px,#8c8cac 28px,#8c8cac 30px);"></div>
<div style="left:0px;top:739px;width:98px;height:29px;border-radius:0 10px 14px 0/0 13px 15px 0;background:linear-gradient(to bottom,#2d7f2d 0px,#3c963c 1px,#b8e4b2 2px,#9cd696 4px,#74c272 7px,#54b054 11px,#46a546 17px,#3d9c3d 23px,#2f8a2f 27px,#1f6f1f 29px);box-shadow:inset -2px 0 2px #1e6e1e, inset -10px 0 5px -5px rgba(190,240,190,.7), inset 2px 0 2px -1px rgba(200,240,200,.5);"></div>
<div class="t sb" style="left:35px;top:741.5px;font-style:italic;font-weight:normal;-webkit-text-stroke:0.55px #fff;font-size:17px;line-height:22px;color:#fff;text-shadow:1px 1px 1px rgba(0,50,0,.6);letter-spacing:0.887px;">start</div>
<svg style="left:10px;top:742px" width="21" height="21" viewBox="0 0 19 19" shape-rendering="auto"><path d="M2.5 2.5 Q6 0.5 9.5 3 L8.2 8.6 Q5 6.4 1.2 8.2 Z" fill="#e8572a"/><path d="M10.6 3.4 Q14 5.6 18 3.6 L16.6 9.4 Q13 11.2 9.4 9 Z" fill="#7cc242"/><path d="M1 9.4 Q4.6 7.4 8 9.8 L6.6 15.4 Q3.4 13.2 -0.2 15 Z" fill="#4a86e4"/><path d="M9 10.2 Q12.6 12.4 16.4 10.6 L15 16.4 Q11.6 18.2 7.8 16 Z" fill="#f4c41c"/></svg>
<div style="left:107px;top:741px;width:159px;height:25px;border-radius:3px;border:1px solid #8e8ea8;background:linear-gradient(to bottom,#ffffff 0%,#f6f6fa 25%,#dcdce8 60%,#c6c6d6 100%);box-shadow:inset 1px 1px 0 #fff;"></div>
<div class="t tk1" style="left:134.8px;top:747px;color:#2a2a2a;transform-origin:0 0;transform:scaleX(0.9846);">Fable: The Lost Chap...</div>
<svg style="left:116px;top:744px" width="18" height="18" viewBox="0 0 18 18" shape-rendering="auto"><defs><linearGradient id="ie" x1="0" y1="0" x2="1" y2="1"><stop offset="0" stop-color="#38b0f8"/><stop offset=".55" stop-color="#1878e0"/><stop offset="1" stop-color="#0838a0"/></linearGradient></defs><path d="M14.1 9.3 A4.5 4.5 0 1 0 13.1 12.3" fill="none" stroke="url(#ie)" stroke-width="2.5"/><path d="M5.5 9.3 L14.4 9.3" stroke="#1464d0" stroke-width="1.9"/><path d="M2 16.2 Q-0.8 11 5.5 5.2 Q11.5 0 15.2 2.4 Q16.4 3.6 15.6 5.4" fill="none" stroke="#f2b42a" stroke-width="1.5"/><path d="M2 16.2 Q4.2 17.2 7 15.2" fill="none" stroke="#e8a020" stroke-width="1.2"/></svg>
<div style="left:267px;top:741px;width:159px;height:25px;border-radius:3px;border:1px solid #4a5864;border-bottom-color:#6a7682;background:linear-gradient(to bottom,#4e5c68 0%,#5c6874 8%,#66727e 30%,#78848e 62%,#8a949e 92%,#7a8690 100%);"></div>
<svg style="left:279px;top:746px" width="14" height="16" viewBox="0 0 14 16" shape-rendering="crispEdges" ><path fill="#000" d="M6 0h3v1h-3zM5 1h1v1h-1zM9 1h1v1h-1zM4 2h1v1h-1zM10 2h1v1h-1zM4 3h1v1h-1zM10 3h1v1h-1zM5 4h1v1h-1zM9 4h1v1h-1zM5 5h2v1h-2zM8 5h1v1h-1zM5 6h2v1h-2zM8 6h1v1h-1zM2 7h3v1h-3zM10 7h3v1h-3zM1 8h1v1h-1zM12 8h1v1h-1zM0 9h1v1h-1zM3 9h2v1h-2zM9 9h2v1h-2zM12 9h1v1h-1zM1 10h2v1h-2zM4 10h1v1h-1zM10 10h2v1h-2zM2 11h2v1h-2zM6 11h2v1h-2zM10 11h2v1h-2zM2 12h1v1h-1zM7 12h1v1h-1zM10 12h3v1h-3zM1 13h1v1h-1zM6 13h2v1h-2zM12 13h1v1h-1zM1 14h1v1h-1zM6 14h2v1h-2zM12 14h1v1h-1zM1 15h12v1h-12z"/><path fill="#ff0" d="M6 1h3v1h-3zM5 2h5v1h-5zM5 3h5v1h-5zM6 4h3v1h-3zM7 5h1v1h-1zM7 6h1v1h-1zM5 7h5v1h-5zM2 8h10v1h-10zM1 9h2v1h-2zM5 9h4v1h-4zM11 9h1v1h-1zM5 10h5v1h-5zM4 11h2v1h-2zM8 11h2v1h-2zM3 12h3v1h-3zM8 12h2v1h-2zM2 13h4v1h-4zM8 13h4v1h-4zM2 14h4v1h-4zM8 14h4v1h-4z"/><path fill="#fff" d="M3 10h1v1h-1zM6 12h1v1h-1z"/></svg>
<div class="t tk2" style="left:297.2px;top:747px;color:#fff;letter-spacing:-0.073px;">Animation Master 200...</div>
<div style="left:746px;top:741px;width:154px;height:25px;border-radius:4px;background:linear-gradient(to bottom,#d8d8d8 0%,#c6c6c6 12%,#b4b4b4 50%,#9c9c9c 88%,#6a6a6a 100%);box-shadow:inset 1px 0 0 rgba(255,255,255,.35);"></div>
<div style="left:749.3px;top:745.2px;width:16px;height:16px;border-radius:50%;border:1px solid #6e6e6e;background:radial-gradient(circle at 50% 40%,#ffffff 0%,#f4f4f4 50%,#d0d0d0 100%);box-shadow:0 0 0 1px rgba(255,255,255,.35);"><svg style="left:2px;top:3px" width="10" height="8" viewBox="0 0 10 8" shape-rendering="auto"><path d="M5 0.8 L5 7.2 L0.5 4 Z M9.3 0.8 L9.3 7.2 L4.8 4 Z" fill="#3c3c3c"/></svg></div>
<div style="left:767.3px;top:744.2px;width:18px;height:18px;border-radius:50%;border:1px solid #6e6e6e;background:radial-gradient(circle at 50% 40%,#ffffff 0%,#f4f4f4 50%,#d0d0d0 100%);box-shadow:0 0 0 1px rgba(255,255,255,.35);"><svg style="left:5px;top:3px" width="9" height="10" viewBox="0 0 9 10" shape-rendering="auto"><path d="M1 0.5 L8.2 5 L1 9.5 Z" fill="#2c2c2c"/></svg></div>
<div style="left:787.6px;top:745.2px;width:16px;height:16px;border-radius:50%;border:1px solid #6e6e6e;background:radial-gradient(circle at 50% 40%,#ffffff 0%,#f4f4f4 50%,#d0d0d0 100%);box-shadow:0 0 0 1px rgba(255,255,255,.35);"><svg style="left:3px;top:3px" width="10" height="8" viewBox="0 0 10 8" shape-rendering="auto"><path d="M0.7 0.8 L0.7 7.2 L5.2 4 Z M5 0.8 L5 7.2 L9.5 4 Z" fill="#3c3c3c"/></svg></div>
<svg style="left:807px;top:746px" width="80" height="14" viewBox="0 0 80 14" shape-rendering="auto"><path d="M1 5 L3.5 5 L7.5 1.5 L7.5 12.5 L3.5 9 L1 9 Z" fill="#2c2c2c"/><path d="M9 5.5 L10.2 7 L9 8.5" fill="none" stroke="#666" stroke-width=".8"/><rect x="13" y="5.8" width="43" height="2.8" rx="1.4" fill="#505050"/><circle cx="56" cy="7.4" r="4.3" fill="#ececec" stroke="#6a6a6a" stroke-width="1"/><circle cx="56" cy="7.4" r="1.4" fill="#555"/><path d="M63 5.2 L65.5 5.2 L69 1.8 L69 12.8 L65.5 9.4 L63 9.4 Z" fill="#2c2c2c"/><path d="M71 4.8 Q72.5 7.3 71 9.8 M73 3.3 Q75.5 7.3 73 11.3 M75 1.8 Q78.5 7.3 75 12.8" fill="none" stroke="#555" stroke-width="1"/></svg>
<div style="left:887px;top:743px;width:11px;height:10px;border-radius:2px;border:1px solid #5c5c5c;background:linear-gradient(#dcdcdc,#b0b0b0);"><div style="left:3px;top:1px;width:5px;height:5px;border:1px solid #333"></div><div style="left:1px;top:3px;width:5px;height:4px;border:1px solid #333;border-top-width:2px;background:#ccc"></div></div>
<div style="left:887px;top:755px;width:11px;height:10px;border-radius:2px;border:1px solid #5c5c5c;background:linear-gradient(#dcdcdc,#b0b0b0);"><svg style="left:1px;top:2px" width="7" height="5" viewBox="0 0 7 5" shape-rendering="auto"><path d="M0 0.5 L7 0.5 L3.5 4.5 Z" fill="#2c2c2c"/></svg></div>
<div style="left:913px;top:738px;width:111px;height:28px;background:linear-gradient(to bottom,#ffffff 0px,#ffffff 5px,#ececf4 8px,#c8c8da 15px,#babace 19px,#c6c6d8 23px,#d6d6e2 28px);border-left:1px solid #6c6c94;"></div>
<div style="left:903.5px;top:744px;width:19px;height:19px;border-radius:50%;border:1px solid #e8e8f4;border-top-color:#70709a;border-left-color:#70709a;background:radial-gradient(circle at 45% 40%,#c4c4dc 0%,#a4a4c6 55%,#8484ac 100%);box-shadow:1px 1px 0 #fff;"><svg style="left:3px;top:3px" width="11" height="11" viewBox="0 0 11 11" shape-rendering="auto"><path d="M7.2 1.8 L3.4 5.5 L7.2 9.2" fill="none" stroke="#5c5c88" stroke-width="2.4" transform="translate(.6,.6)"/><path d="M7.2 1.8 L3.4 5.5 L7.2 9.2" fill="none" stroke="#fff" stroke-width="2.2"/></svg></div>
<svg style="left:926px;top:745px" width="14" height="16" viewBox="0 0 14 16" shape-rendering="auto"><path d="M0.5 15 L3 9 L5 3.5 L7.5 1 L12.5 1.8 L9.5 3.2 L10.5 9 L12 15 Z" fill="#0808a8" stroke="#000078" stroke-width=".5"/><path d="M3.5 6.5 l1.4 .2 .6 -1.2 .3 1.4 1.3 .4 -1.2 .6 0 1.3 -1 -1 -1.4 .3 .8 -1.1z M8.5 8.8 l1.1 .4 .8 -.9 0 1.2 1.1 .5 -1.2 .3 -.2 1.2 -.7 -1 -1.2 .1 .8 -.9z" fill="#ff0"/></svg>
<svg style="left:942px;top:744px" width="15" height="18" viewBox="0 0 15 18" shape-rendering="auto"><rect x="6.5" y="1" width="7.5" height="7" fill="#4c5aa4" stroke="#8c98d0" stroke-width="1"/><path d="M9 9.5 L12 9.5 L12.5 11 L8.5 11Z" fill="#b0b8d8"/><rect x="1" y="5" width="7.5" height="7" fill="#384078" stroke="#a8b0dc" stroke-width="1"/><path d="M3.5 13 L6.5 13 L7 14.5 L3 14.5Z" fill="#c0c6e0"/><ellipse cx="5" cy="15.6" rx="4.2" ry="1.5" fill="#c8cce6"/><ellipse cx="10.5" cy="12" rx="3" ry="1.1" fill="#b8bedc"/></svg>
<div class="t clk" style="left:967.8px;top:747px;transform-origin:0 0;transform:scaleX(0.9397);">9:28 PM</div>
</div></body></html>
